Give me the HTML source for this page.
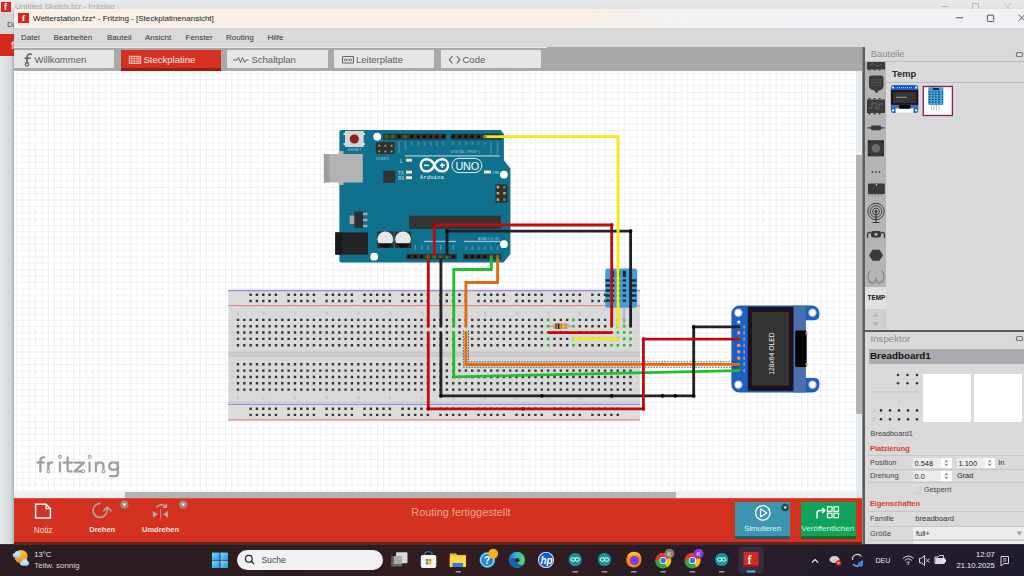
<!DOCTYPE html>
<html><head><meta charset="utf-8"><style>
*{margin:0;padding:0;box-sizing:border-box}
html,body{width:1024px;height:576px;overflow:hidden;background:#e4e4e4;font-family:"Liberation Sans",sans-serif}
.a{position:absolute}
.t{position:absolute;white-space:nowrap;line-height:1}
svg{position:absolute;overflow:visible}
#bgtitle{left:0;top:0;width:1024px;height:14px;background:linear-gradient(180deg,#e9e9e9,#e4e4e4 50%,#dcdcdc)}
#leftstrip{left:0;top:14px;width:14px;height:530px;background:linear-gradient(90deg,#e3e8eb,#d3dadd 70%,#bcc4c8)}
#title{left:14px;top:9px;width:1010px;height:19px;background:linear-gradient(90deg,#f9efe6 0%,#f8efe7 57%,#f1f1f4 67%,#f0f1f5 100%)}
#menu{left:14px;top:28px;width:1010px;height:19px;background:#d9d9d9}
#tabbar{left:14px;top:47px;width:849px;height:24px;background:#a9a9a9}
.tab{position:absolute;top:50px;height:18px;background:#e6e6e6}
.tabtxt{position:absolute;top:54.5px;font-size:9.5px;color:#5b5b5b;white-space:nowrap;line-height:1}
.mi{position:absolute;top:34px;font-size:8px;color:#333;white-space:nowrap;line-height:1}
#vscroll{left:856px;top:71px;width:7px;height:421px;background:#e6ecef}
#vthumb{left:856px;top:155px;width:7px;height:259px;background:#b3b3b3}
#hscroll{left:14px;top:492px;width:842px;height:6px;background:#eef1f3}
#hthumb{left:125px;top:492px;width:551px;height:6px;background:#b3b3b3}
#toolbar{left:14px;top:498px;width:849px;height:45px;background:#d43220}
#tbline{left:14px;top:542px;width:849px;height:2px;background:#7a2018}
#rdiv{left:862px;top:47px;width:3px;height:497px;background:#6e6e6e}
#rpanel{left:865px;top:47px;width:159px;height:497px;background:#d9d9d9}
#taskbar{left:0;top:544px;width:1024px;height:32px;background:linear-gradient(90deg,#2c1f25,#2a1e2a 50%,#231d2c)}
</style></head><body>
<div class="a" id="bgtitle"></div>
<div class="a" style="left:1px;top:2px;width:10px;height:10px;background:#d42a1e"></div>
<div class="t" style="left:15px;top:3px;font-size:8px;color:#a8a8a8">Untitled Sketch.fzz - Fritzing</div>
<svg style="left:0;top:0" width="1024" height="14" viewBox="0 0 1024 14"><path d="M941 6.5H948" stroke="#bbb" stroke-width="1"/><rect x="972.5" y="3.5" width="6" height="6" fill="none" stroke="#bbb" stroke-width="1"/><path d="M1004 3L1011 10M1011 3L1004 10" stroke="#bbb" stroke-width="1"/></svg>
<div class="a" id="leftstrip"></div>
<div class="a" style="left:0;top:13px;width:14px;height:21px;background:#d6d6d6"></div>
<div class="t" style="left:7px;top:21px;font-size:8px;color:#444">Da</div>
<div class="a" style="left:0;top:34px;width:14px;height:22px;background:#d22b1d"></div>
<div class="t" style="left:11px;top:40px;font-size:11px;font-weight:bold;color:#f3d0cb">f</div>
<div class="t" style="left:4px;top:3px;font-size:9px;font-weight:bold;color:#fff">f</div>
<div class="a" style="left:12px;top:9px;width:2px;height:535px;background:linear-gradient(90deg,rgba(0,0,0,0),rgba(0,0,0,0.12))"></div>
<div class="a" id="title"></div>
<div class="a" style="left:18px;top:13px;width:11px;height:10px;background:#d42a1e"></div>
<div class="t" style="left:22px;top:14px;font-size:9px;font-weight:bold;color:#fff;font-family:'Liberation Serif'">f</div>
<div class="t" style="left:33px;top:15px;font-size:8px;color:#1a1a1a">Wetterstation.fzz* - Fritzing - [Steckplatinenansicht]</div>
<svg style="left:0;top:0" width="1024" height="30" viewBox="0 0 1024 30"><path d="M956 17.8H963.2" stroke="#444" stroke-width="0.9"/><rect x="987.4" y="15.2" width="6.3" height="6.3" rx="0.8" fill="none" stroke="#444" stroke-width="0.9"/><path d="M1018.4 14.5L1025 21.1M1025 14.5L1018.4 21.1" stroke="#444" stroke-width="0.9"/></svg>
<div class="a" id="menu"></div>
<div class="mi" style="left:21px">Datei</div>
<div class="mi" style="left:53.5px">Bearbeiten</div>
<div class="mi" style="left:107px">Bauteil</div>
<div class="mi" style="left:145px">Ansicht</div>
<div class="mi" style="left:185.5px">Fenster</div>
<div class="mi" style="left:226px">Routing</div>
<div class="mi" style="left:267.5px">Hilfe</div>
<div class="a" id="tabbar"></div>
<div class="a" style="left:14px;top:47px;width:533px;height:1px;background:#e8e8e8"></div>
<div class="tab" style="left:14px;width:100px"></div>
<div class="tab" style="left:121px;width:100px;background:#d43220;height:20px"></div>
<div class="a" style="left:121px;top:68px;width:100px;height:3px;background:#9a1c10"></div>
<div class="tab" style="left:227px;width:101px"></div>
<div class="tab" style="left:334px;width:100px"></div>
<div class="tab" style="left:441px;width:100px"></div>
<div class="tabtxt" style="left:34.5px">Willkommen</div>
<div class="tabtxt" style="left:143.5px;color:#fbe9e6">Steckplatine</div>
<div class="tabtxt" style="left:251.5px">Schaltplan</div>
<div class="tabtxt" style="left:356px">Leiterplatte</div>
<div class="tabtxt" style="left:462.5px">Code</div>
<svg width="1024" height="80" viewBox="0 0 1024 80" style="left:0;top:0"><path d="M31.2 54.3Q27.3 53.3 27 57.5V62.8" fill="none" stroke="#666" stroke-width="1.8" stroke-linecap="round"/><path d="M24.6 58.2H30.6" stroke="#666" stroke-width="1.6"/><circle cx="27" cy="64.4" r="1.7" fill="none" stroke="#666" stroke-width="1.2"/><rect x="129.3" y="56.3" width="11.4" height="7" fill="none" stroke="#f6d0c8" stroke-width="1"/><path d="M131.8 56.3V63.3M134.4 56.3V63.3M137 56.3V63.3M139 56.3V63.3M129.3 58.6H140.7M129.3 61H140.7" stroke="#f6d0c8" stroke-width="0.7"/><path d="M233 60H237L238.5 57.5L240.5 62.5L242.5 57.5L244.5 62.5L246 60H248.5" fill="none" stroke="#666" stroke-width="1"/><rect x="342.5" y="56.5" width="11" height="6.5" rx="0.8" fill="none" stroke="#666" stroke-width="1.1"/><circle cx="345.5" cy="59.8" r="1.1" fill="none" stroke="#666" stroke-width="0.9"/><circle cx="350.5" cy="59.8" r="1.1" fill="none" stroke="#666" stroke-width="0.9"/><path d="M346.6 59.8H349.4" stroke="#666" stroke-width="0.9"/><path d="M452.5 56L449.3 59.7L452.5 63.4M456.8 56L460 59.7L456.8 63.4" fill="none" stroke="#666" stroke-width="1.1"/></svg>
<div class="a" id="canvasbox" style="left:14px;top:71px;width:842px;height:421px;background:#fff;overflow:hidden"><svg width="842" height="421" viewBox="14 71 842 421" style="left:0;top:0" font-family="Liberation Sans"><defs><pattern id="grid" x="16.1" y="73.0" width="6.33" height="6.33" patternUnits="userSpaceOnUse"><path d="M0 0.5H6.33M0.5 0V6.33" stroke="#eef1f5" stroke-width="1" fill="none"/></pattern></defs><rect x="14" y="71" width="842" height="421" fill="url(#grid)"/><g fill="none" stroke="#a0a0a0" stroke-width="2.3" stroke-linecap="round" stroke-linejoin="round"><path d="M40.4 471.4V460.2Q40.4 457.3 43.4 457.3H44.2M37.4 462.5H43.6"/><path d="M48.3 470V462.6M48.3 465.5Q49.2 462.4 52.3 462.4"/><path d="M59.9 462.6V471.4"/><path d="M67.6 457.4V469.4Q67.6 471.4 69.6 471.4H71.4M63.6 462.6H72"/><path d="M74.6 462.6H84L74.6 471.4H81.6"/><path d="M89.6 462.6V471.4"/><path d="M95.9 471.4V462.6M95.9 465.6Q96.9 462.4 100 462.4Q103.4 462.4 103.4 465.8V470"/><path d="M117.9 462.4V473.6Q117.9 476.2 115.2 476.2H110M117.9 466.2Q117.9 462.4 113.6 462.4Q109.2 462.4 109.2 466.2Q109.2 469.8 113.4 469.8Q117.9 469.8 117.9 466.2"/></g><g fill="#fff" stroke="#a0a0a0" stroke-width="1.1"><circle cx="48.3" cy="471.2" r="1.4"/><circle cx="59.9" cy="456.8" r="1.4"/><circle cx="83.2" cy="471.2" r="1.4"/><circle cx="89.6" cy="456.8" r="1.4"/><circle cx="103.4" cy="471.2" r="1.4"/></g><rect x="228.3" y="289.7" width="411.7" height="130.8" fill="#d9d9d9"/><rect x="228.3" y="289.7" width="411.7" height="15.800000000000011" fill="#dcdcdc"/><rect x="228.3" y="403" width="411.7" height="17.5" fill="#dcdcdc"/><rect x="228.3" y="351.2" width="411.7" height="5.8" fill="#cbcaca"/><rect x="228.3" y="290" width="411.7" height="1.3" fill="#8f8fe6"/><rect x="228.3" y="305" width="411.7" height="1.1" fill="#e58585"/><rect x="228.3" y="401.8" width="411.7" height="0.8" fill="#c2c2c2"/><rect x="228.3" y="403.8" width="411.7" height="1.2" fill="#8f8fe6"/><rect x="228.3" y="419.2" width="411.7" height="1.2" fill="#e58585"/><path d="M249.40 293.60h2.4v2.4h-2.4zM249.40 299.75h2.4v2.4h-2.4zM249.40 407.50h2.4v2.4h-2.4zM249.40 413.70h2.4v2.4h-2.4zM255.73 293.60h2.4v2.4h-2.4zM255.73 299.75h2.4v2.4h-2.4zM255.73 407.50h2.4v2.4h-2.4zM255.73 413.70h2.4v2.4h-2.4zM262.06 293.60h2.4v2.4h-2.4zM262.06 299.75h2.4v2.4h-2.4zM262.06 407.50h2.4v2.4h-2.4zM262.06 413.70h2.4v2.4h-2.4zM268.39 293.60h2.4v2.4h-2.4zM268.39 299.75h2.4v2.4h-2.4zM268.39 407.50h2.4v2.4h-2.4zM268.39 413.70h2.4v2.4h-2.4zM274.72 293.60h2.4v2.4h-2.4zM274.72 299.75h2.4v2.4h-2.4zM274.72 407.50h2.4v2.4h-2.4zM274.72 413.70h2.4v2.4h-2.4zM287.38 293.60h2.4v2.4h-2.4zM287.38 299.75h2.4v2.4h-2.4zM287.38 407.50h2.4v2.4h-2.4zM287.38 413.70h2.4v2.4h-2.4zM293.71 293.60h2.4v2.4h-2.4zM293.71 299.75h2.4v2.4h-2.4zM293.71 407.50h2.4v2.4h-2.4zM293.71 413.70h2.4v2.4h-2.4zM300.04 293.60h2.4v2.4h-2.4zM300.04 299.75h2.4v2.4h-2.4zM300.04 407.50h2.4v2.4h-2.4zM300.04 413.70h2.4v2.4h-2.4zM306.37 293.60h2.4v2.4h-2.4zM306.37 299.75h2.4v2.4h-2.4zM306.37 407.50h2.4v2.4h-2.4zM306.37 413.70h2.4v2.4h-2.4zM312.70 293.60h2.4v2.4h-2.4zM312.70 299.75h2.4v2.4h-2.4zM312.70 407.50h2.4v2.4h-2.4zM312.70 413.70h2.4v2.4h-2.4zM325.36 293.60h2.4v2.4h-2.4zM325.36 299.75h2.4v2.4h-2.4zM325.36 407.50h2.4v2.4h-2.4zM325.36 413.70h2.4v2.4h-2.4zM331.69 293.60h2.4v2.4h-2.4zM331.69 299.75h2.4v2.4h-2.4zM331.69 407.50h2.4v2.4h-2.4zM331.69 413.70h2.4v2.4h-2.4zM338.02 293.60h2.4v2.4h-2.4zM338.02 299.75h2.4v2.4h-2.4zM338.02 407.50h2.4v2.4h-2.4zM338.02 413.70h2.4v2.4h-2.4zM344.35 293.60h2.4v2.4h-2.4zM344.35 299.75h2.4v2.4h-2.4zM344.35 407.50h2.4v2.4h-2.4zM344.35 413.70h2.4v2.4h-2.4zM350.68 293.60h2.4v2.4h-2.4zM350.68 299.75h2.4v2.4h-2.4zM350.68 407.50h2.4v2.4h-2.4zM350.68 413.70h2.4v2.4h-2.4zM363.34 293.60h2.4v2.4h-2.4zM363.34 299.75h2.4v2.4h-2.4zM363.34 407.50h2.4v2.4h-2.4zM363.34 413.70h2.4v2.4h-2.4zM369.67 293.60h2.4v2.4h-2.4zM369.67 299.75h2.4v2.4h-2.4zM369.67 407.50h2.4v2.4h-2.4zM369.67 413.70h2.4v2.4h-2.4zM376.00 293.60h2.4v2.4h-2.4zM376.00 299.75h2.4v2.4h-2.4zM376.00 407.50h2.4v2.4h-2.4zM376.00 413.70h2.4v2.4h-2.4zM382.33 293.60h2.4v2.4h-2.4zM382.33 299.75h2.4v2.4h-2.4zM382.33 407.50h2.4v2.4h-2.4zM382.33 413.70h2.4v2.4h-2.4zM388.66 293.60h2.4v2.4h-2.4zM388.66 299.75h2.4v2.4h-2.4zM388.66 407.50h2.4v2.4h-2.4zM388.66 413.70h2.4v2.4h-2.4zM401.32 293.60h2.4v2.4h-2.4zM401.32 299.75h2.4v2.4h-2.4zM401.32 407.50h2.4v2.4h-2.4zM401.32 413.70h2.4v2.4h-2.4zM407.65 293.60h2.4v2.4h-2.4zM407.65 299.75h2.4v2.4h-2.4zM407.65 407.50h2.4v2.4h-2.4zM407.65 413.70h2.4v2.4h-2.4zM413.98 293.60h2.4v2.4h-2.4zM413.98 299.75h2.4v2.4h-2.4zM413.98 407.50h2.4v2.4h-2.4zM413.98 413.70h2.4v2.4h-2.4zM420.31 293.60h2.4v2.4h-2.4zM420.31 299.75h2.4v2.4h-2.4zM420.31 407.50h2.4v2.4h-2.4zM420.31 413.70h2.4v2.4h-2.4zM426.64 293.60h2.4v2.4h-2.4zM426.64 299.75h2.4v2.4h-2.4zM426.64 407.50h2.4v2.4h-2.4zM426.64 413.70h2.4v2.4h-2.4zM439.30 293.60h2.4v2.4h-2.4zM439.30 299.75h2.4v2.4h-2.4zM439.30 407.50h2.4v2.4h-2.4zM439.30 413.70h2.4v2.4h-2.4zM445.63 293.60h2.4v2.4h-2.4zM445.63 299.75h2.4v2.4h-2.4zM445.63 407.50h2.4v2.4h-2.4zM445.63 413.70h2.4v2.4h-2.4zM451.96 293.60h2.4v2.4h-2.4zM451.96 299.75h2.4v2.4h-2.4zM451.96 407.50h2.4v2.4h-2.4zM451.96 413.70h2.4v2.4h-2.4zM458.29 293.60h2.4v2.4h-2.4zM458.29 299.75h2.4v2.4h-2.4zM458.29 407.50h2.4v2.4h-2.4zM458.29 413.70h2.4v2.4h-2.4zM464.62 293.60h2.4v2.4h-2.4zM464.62 299.75h2.4v2.4h-2.4zM464.62 407.50h2.4v2.4h-2.4zM464.62 413.70h2.4v2.4h-2.4zM477.28 293.60h2.4v2.4h-2.4zM477.28 299.75h2.4v2.4h-2.4zM477.28 407.50h2.4v2.4h-2.4zM477.28 413.70h2.4v2.4h-2.4zM483.61 293.60h2.4v2.4h-2.4zM483.61 299.75h2.4v2.4h-2.4zM483.61 407.50h2.4v2.4h-2.4zM483.61 413.70h2.4v2.4h-2.4zM489.94 293.60h2.4v2.4h-2.4zM489.94 299.75h2.4v2.4h-2.4zM489.94 407.50h2.4v2.4h-2.4zM489.94 413.70h2.4v2.4h-2.4zM496.27 293.60h2.4v2.4h-2.4zM496.27 299.75h2.4v2.4h-2.4zM496.27 407.50h2.4v2.4h-2.4zM496.27 413.70h2.4v2.4h-2.4zM502.60 293.60h2.4v2.4h-2.4zM502.60 299.75h2.4v2.4h-2.4zM502.60 407.50h2.4v2.4h-2.4zM502.60 413.70h2.4v2.4h-2.4zM515.26 293.60h2.4v2.4h-2.4zM515.26 299.75h2.4v2.4h-2.4zM515.26 407.50h2.4v2.4h-2.4zM515.26 413.70h2.4v2.4h-2.4zM521.59 293.60h2.4v2.4h-2.4zM521.59 299.75h2.4v2.4h-2.4zM521.59 407.50h2.4v2.4h-2.4zM521.59 413.70h2.4v2.4h-2.4zM527.92 293.60h2.4v2.4h-2.4zM527.92 299.75h2.4v2.4h-2.4zM527.92 407.50h2.4v2.4h-2.4zM527.92 413.70h2.4v2.4h-2.4zM534.25 293.60h2.4v2.4h-2.4zM534.25 299.75h2.4v2.4h-2.4zM534.25 407.50h2.4v2.4h-2.4zM534.25 413.70h2.4v2.4h-2.4zM540.58 293.60h2.4v2.4h-2.4zM540.58 299.75h2.4v2.4h-2.4zM540.58 407.50h2.4v2.4h-2.4zM540.58 413.70h2.4v2.4h-2.4zM553.24 293.60h2.4v2.4h-2.4zM553.24 299.75h2.4v2.4h-2.4zM553.24 407.50h2.4v2.4h-2.4zM553.24 413.70h2.4v2.4h-2.4zM559.57 293.60h2.4v2.4h-2.4zM559.57 299.75h2.4v2.4h-2.4zM559.57 407.50h2.4v2.4h-2.4zM559.57 413.70h2.4v2.4h-2.4zM565.90 293.60h2.4v2.4h-2.4zM565.90 299.75h2.4v2.4h-2.4zM565.90 407.50h2.4v2.4h-2.4zM565.90 413.70h2.4v2.4h-2.4zM572.23 293.60h2.4v2.4h-2.4zM572.23 299.75h2.4v2.4h-2.4zM572.23 407.50h2.4v2.4h-2.4zM572.23 413.70h2.4v2.4h-2.4zM578.56 293.60h2.4v2.4h-2.4zM578.56 299.75h2.4v2.4h-2.4zM578.56 407.50h2.4v2.4h-2.4zM578.56 413.70h2.4v2.4h-2.4zM591.22 293.60h2.4v2.4h-2.4zM591.22 299.75h2.4v2.4h-2.4zM591.22 407.50h2.4v2.4h-2.4zM591.22 413.70h2.4v2.4h-2.4zM597.55 293.60h2.4v2.4h-2.4zM597.55 299.75h2.4v2.4h-2.4zM597.55 407.50h2.4v2.4h-2.4zM597.55 413.70h2.4v2.4h-2.4zM603.88 293.60h2.4v2.4h-2.4zM603.88 299.75h2.4v2.4h-2.4zM603.88 407.50h2.4v2.4h-2.4zM603.88 413.70h2.4v2.4h-2.4zM610.21 293.60h2.4v2.4h-2.4zM610.21 299.75h2.4v2.4h-2.4zM610.21 407.50h2.4v2.4h-2.4zM610.21 413.70h2.4v2.4h-2.4zM616.54 293.60h2.4v2.4h-2.4zM616.54 299.75h2.4v2.4h-2.4zM616.54 407.50h2.4v2.4h-2.4zM616.54 413.70h2.4v2.4h-2.4zM236.80 318.70h2.4v2.4h-2.4zM236.80 363.10h2.4v2.4h-2.4zM236.80 325.03h2.4v2.4h-2.4zM236.80 369.43h2.4v2.4h-2.4zM236.80 331.36h2.4v2.4h-2.4zM236.80 375.76h2.4v2.4h-2.4zM236.80 337.69h2.4v2.4h-2.4zM236.80 382.09h2.4v2.4h-2.4zM236.80 344.02h2.4v2.4h-2.4zM236.80 388.42h2.4v2.4h-2.4zM243.13 318.70h2.4v2.4h-2.4zM243.13 363.10h2.4v2.4h-2.4zM243.13 325.03h2.4v2.4h-2.4zM243.13 369.43h2.4v2.4h-2.4zM243.13 331.36h2.4v2.4h-2.4zM243.13 375.76h2.4v2.4h-2.4zM243.13 337.69h2.4v2.4h-2.4zM243.13 382.09h2.4v2.4h-2.4zM243.13 344.02h2.4v2.4h-2.4zM243.13 388.42h2.4v2.4h-2.4zM249.46 318.70h2.4v2.4h-2.4zM249.46 363.10h2.4v2.4h-2.4zM249.46 325.03h2.4v2.4h-2.4zM249.46 369.43h2.4v2.4h-2.4zM249.46 331.36h2.4v2.4h-2.4zM249.46 375.76h2.4v2.4h-2.4zM249.46 337.69h2.4v2.4h-2.4zM249.46 382.09h2.4v2.4h-2.4zM249.46 344.02h2.4v2.4h-2.4zM249.46 388.42h2.4v2.4h-2.4zM255.79 318.70h2.4v2.4h-2.4zM255.79 363.10h2.4v2.4h-2.4zM255.79 325.03h2.4v2.4h-2.4zM255.79 369.43h2.4v2.4h-2.4zM255.79 331.36h2.4v2.4h-2.4zM255.79 375.76h2.4v2.4h-2.4zM255.79 337.69h2.4v2.4h-2.4zM255.79 382.09h2.4v2.4h-2.4zM255.79 344.02h2.4v2.4h-2.4zM255.79 388.42h2.4v2.4h-2.4zM262.12 318.70h2.4v2.4h-2.4zM262.12 363.10h2.4v2.4h-2.4zM262.12 325.03h2.4v2.4h-2.4zM262.12 369.43h2.4v2.4h-2.4zM262.12 331.36h2.4v2.4h-2.4zM262.12 375.76h2.4v2.4h-2.4zM262.12 337.69h2.4v2.4h-2.4zM262.12 382.09h2.4v2.4h-2.4zM262.12 344.02h2.4v2.4h-2.4zM262.12 388.42h2.4v2.4h-2.4zM268.45 318.70h2.4v2.4h-2.4zM268.45 363.10h2.4v2.4h-2.4zM268.45 325.03h2.4v2.4h-2.4zM268.45 369.43h2.4v2.4h-2.4zM268.45 331.36h2.4v2.4h-2.4zM268.45 375.76h2.4v2.4h-2.4zM268.45 337.69h2.4v2.4h-2.4zM268.45 382.09h2.4v2.4h-2.4zM268.45 344.02h2.4v2.4h-2.4zM268.45 388.42h2.4v2.4h-2.4zM274.78 318.70h2.4v2.4h-2.4zM274.78 363.10h2.4v2.4h-2.4zM274.78 325.03h2.4v2.4h-2.4zM274.78 369.43h2.4v2.4h-2.4zM274.78 331.36h2.4v2.4h-2.4zM274.78 375.76h2.4v2.4h-2.4zM274.78 337.69h2.4v2.4h-2.4zM274.78 382.09h2.4v2.4h-2.4zM274.78 344.02h2.4v2.4h-2.4zM274.78 388.42h2.4v2.4h-2.4zM281.11 318.70h2.4v2.4h-2.4zM281.11 363.10h2.4v2.4h-2.4zM281.11 325.03h2.4v2.4h-2.4zM281.11 369.43h2.4v2.4h-2.4zM281.11 331.36h2.4v2.4h-2.4zM281.11 375.76h2.4v2.4h-2.4zM281.11 337.69h2.4v2.4h-2.4zM281.11 382.09h2.4v2.4h-2.4zM281.11 344.02h2.4v2.4h-2.4zM281.11 388.42h2.4v2.4h-2.4zM287.44 318.70h2.4v2.4h-2.4zM287.44 363.10h2.4v2.4h-2.4zM287.44 325.03h2.4v2.4h-2.4zM287.44 369.43h2.4v2.4h-2.4zM287.44 331.36h2.4v2.4h-2.4zM287.44 375.76h2.4v2.4h-2.4zM287.44 337.69h2.4v2.4h-2.4zM287.44 382.09h2.4v2.4h-2.4zM287.44 344.02h2.4v2.4h-2.4zM287.44 388.42h2.4v2.4h-2.4zM293.77 318.70h2.4v2.4h-2.4zM293.77 363.10h2.4v2.4h-2.4zM293.77 325.03h2.4v2.4h-2.4zM293.77 369.43h2.4v2.4h-2.4zM293.77 331.36h2.4v2.4h-2.4zM293.77 375.76h2.4v2.4h-2.4zM293.77 337.69h2.4v2.4h-2.4zM293.77 382.09h2.4v2.4h-2.4zM293.77 344.02h2.4v2.4h-2.4zM293.77 388.42h2.4v2.4h-2.4zM300.10 318.70h2.4v2.4h-2.4zM300.10 363.10h2.4v2.4h-2.4zM300.10 325.03h2.4v2.4h-2.4zM300.10 369.43h2.4v2.4h-2.4zM300.10 331.36h2.4v2.4h-2.4zM300.10 375.76h2.4v2.4h-2.4zM300.10 337.69h2.4v2.4h-2.4zM300.10 382.09h2.4v2.4h-2.4zM300.10 344.02h2.4v2.4h-2.4zM300.10 388.42h2.4v2.4h-2.4zM306.43 318.70h2.4v2.4h-2.4zM306.43 363.10h2.4v2.4h-2.4zM306.43 325.03h2.4v2.4h-2.4zM306.43 369.43h2.4v2.4h-2.4zM306.43 331.36h2.4v2.4h-2.4zM306.43 375.76h2.4v2.4h-2.4zM306.43 337.69h2.4v2.4h-2.4zM306.43 382.09h2.4v2.4h-2.4zM306.43 344.02h2.4v2.4h-2.4zM306.43 388.42h2.4v2.4h-2.4zM312.76 318.70h2.4v2.4h-2.4zM312.76 363.10h2.4v2.4h-2.4zM312.76 325.03h2.4v2.4h-2.4zM312.76 369.43h2.4v2.4h-2.4zM312.76 331.36h2.4v2.4h-2.4zM312.76 375.76h2.4v2.4h-2.4zM312.76 337.69h2.4v2.4h-2.4zM312.76 382.09h2.4v2.4h-2.4zM312.76 344.02h2.4v2.4h-2.4zM312.76 388.42h2.4v2.4h-2.4zM319.09 318.70h2.4v2.4h-2.4zM319.09 363.10h2.4v2.4h-2.4zM319.09 325.03h2.4v2.4h-2.4zM319.09 369.43h2.4v2.4h-2.4zM319.09 331.36h2.4v2.4h-2.4zM319.09 375.76h2.4v2.4h-2.4zM319.09 337.69h2.4v2.4h-2.4zM319.09 382.09h2.4v2.4h-2.4zM319.09 344.02h2.4v2.4h-2.4zM319.09 388.42h2.4v2.4h-2.4zM325.42 318.70h2.4v2.4h-2.4zM325.42 363.10h2.4v2.4h-2.4zM325.42 325.03h2.4v2.4h-2.4zM325.42 369.43h2.4v2.4h-2.4zM325.42 331.36h2.4v2.4h-2.4zM325.42 375.76h2.4v2.4h-2.4zM325.42 337.69h2.4v2.4h-2.4zM325.42 382.09h2.4v2.4h-2.4zM325.42 344.02h2.4v2.4h-2.4zM325.42 388.42h2.4v2.4h-2.4zM331.75 318.70h2.4v2.4h-2.4zM331.75 363.10h2.4v2.4h-2.4zM331.75 325.03h2.4v2.4h-2.4zM331.75 369.43h2.4v2.4h-2.4zM331.75 331.36h2.4v2.4h-2.4zM331.75 375.76h2.4v2.4h-2.4zM331.75 337.69h2.4v2.4h-2.4zM331.75 382.09h2.4v2.4h-2.4zM331.75 344.02h2.4v2.4h-2.4zM331.75 388.42h2.4v2.4h-2.4zM338.08 318.70h2.4v2.4h-2.4zM338.08 363.10h2.4v2.4h-2.4zM338.08 325.03h2.4v2.4h-2.4zM338.08 369.43h2.4v2.4h-2.4zM338.08 331.36h2.4v2.4h-2.4zM338.08 375.76h2.4v2.4h-2.4zM338.08 337.69h2.4v2.4h-2.4zM338.08 382.09h2.4v2.4h-2.4zM338.08 344.02h2.4v2.4h-2.4zM338.08 388.42h2.4v2.4h-2.4zM344.41 318.70h2.4v2.4h-2.4zM344.41 363.10h2.4v2.4h-2.4zM344.41 325.03h2.4v2.4h-2.4zM344.41 369.43h2.4v2.4h-2.4zM344.41 331.36h2.4v2.4h-2.4zM344.41 375.76h2.4v2.4h-2.4zM344.41 337.69h2.4v2.4h-2.4zM344.41 382.09h2.4v2.4h-2.4zM344.41 344.02h2.4v2.4h-2.4zM344.41 388.42h2.4v2.4h-2.4zM350.74 318.70h2.4v2.4h-2.4zM350.74 363.10h2.4v2.4h-2.4zM350.74 325.03h2.4v2.4h-2.4zM350.74 369.43h2.4v2.4h-2.4zM350.74 331.36h2.4v2.4h-2.4zM350.74 375.76h2.4v2.4h-2.4zM350.74 337.69h2.4v2.4h-2.4zM350.74 382.09h2.4v2.4h-2.4zM350.74 344.02h2.4v2.4h-2.4zM350.74 388.42h2.4v2.4h-2.4zM357.07 318.70h2.4v2.4h-2.4zM357.07 363.10h2.4v2.4h-2.4zM357.07 325.03h2.4v2.4h-2.4zM357.07 369.43h2.4v2.4h-2.4zM357.07 331.36h2.4v2.4h-2.4zM357.07 375.76h2.4v2.4h-2.4zM357.07 337.69h2.4v2.4h-2.4zM357.07 382.09h2.4v2.4h-2.4zM357.07 344.02h2.4v2.4h-2.4zM357.07 388.42h2.4v2.4h-2.4zM363.40 318.70h2.4v2.4h-2.4zM363.40 363.10h2.4v2.4h-2.4zM363.40 325.03h2.4v2.4h-2.4zM363.40 369.43h2.4v2.4h-2.4zM363.40 331.36h2.4v2.4h-2.4zM363.40 375.76h2.4v2.4h-2.4zM363.40 337.69h2.4v2.4h-2.4zM363.40 382.09h2.4v2.4h-2.4zM363.40 344.02h2.4v2.4h-2.4zM363.40 388.42h2.4v2.4h-2.4zM369.73 318.70h2.4v2.4h-2.4zM369.73 363.10h2.4v2.4h-2.4zM369.73 325.03h2.4v2.4h-2.4zM369.73 369.43h2.4v2.4h-2.4zM369.73 331.36h2.4v2.4h-2.4zM369.73 375.76h2.4v2.4h-2.4zM369.73 337.69h2.4v2.4h-2.4zM369.73 382.09h2.4v2.4h-2.4zM369.73 344.02h2.4v2.4h-2.4zM369.73 388.42h2.4v2.4h-2.4zM376.06 318.70h2.4v2.4h-2.4zM376.06 363.10h2.4v2.4h-2.4zM376.06 325.03h2.4v2.4h-2.4zM376.06 369.43h2.4v2.4h-2.4zM376.06 331.36h2.4v2.4h-2.4zM376.06 375.76h2.4v2.4h-2.4zM376.06 337.69h2.4v2.4h-2.4zM376.06 382.09h2.4v2.4h-2.4zM376.06 344.02h2.4v2.4h-2.4zM376.06 388.42h2.4v2.4h-2.4zM382.39 318.70h2.4v2.4h-2.4zM382.39 363.10h2.4v2.4h-2.4zM382.39 325.03h2.4v2.4h-2.4zM382.39 369.43h2.4v2.4h-2.4zM382.39 331.36h2.4v2.4h-2.4zM382.39 375.76h2.4v2.4h-2.4zM382.39 337.69h2.4v2.4h-2.4zM382.39 382.09h2.4v2.4h-2.4zM382.39 344.02h2.4v2.4h-2.4zM382.39 388.42h2.4v2.4h-2.4zM388.72 318.70h2.4v2.4h-2.4zM388.72 363.10h2.4v2.4h-2.4zM388.72 325.03h2.4v2.4h-2.4zM388.72 369.43h2.4v2.4h-2.4zM388.72 331.36h2.4v2.4h-2.4zM388.72 375.76h2.4v2.4h-2.4zM388.72 337.69h2.4v2.4h-2.4zM388.72 382.09h2.4v2.4h-2.4zM388.72 344.02h2.4v2.4h-2.4zM388.72 388.42h2.4v2.4h-2.4zM395.05 318.70h2.4v2.4h-2.4zM395.05 363.10h2.4v2.4h-2.4zM395.05 325.03h2.4v2.4h-2.4zM395.05 369.43h2.4v2.4h-2.4zM395.05 331.36h2.4v2.4h-2.4zM395.05 375.76h2.4v2.4h-2.4zM395.05 337.69h2.4v2.4h-2.4zM395.05 382.09h2.4v2.4h-2.4zM395.05 344.02h2.4v2.4h-2.4zM395.05 388.42h2.4v2.4h-2.4zM401.38 318.70h2.4v2.4h-2.4zM401.38 363.10h2.4v2.4h-2.4zM401.38 325.03h2.4v2.4h-2.4zM401.38 369.43h2.4v2.4h-2.4zM401.38 331.36h2.4v2.4h-2.4zM401.38 375.76h2.4v2.4h-2.4zM401.38 337.69h2.4v2.4h-2.4zM401.38 382.09h2.4v2.4h-2.4zM401.38 344.02h2.4v2.4h-2.4zM401.38 388.42h2.4v2.4h-2.4zM407.71 318.70h2.4v2.4h-2.4zM407.71 363.10h2.4v2.4h-2.4zM407.71 325.03h2.4v2.4h-2.4zM407.71 369.43h2.4v2.4h-2.4zM407.71 331.36h2.4v2.4h-2.4zM407.71 375.76h2.4v2.4h-2.4zM407.71 337.69h2.4v2.4h-2.4zM407.71 382.09h2.4v2.4h-2.4zM407.71 344.02h2.4v2.4h-2.4zM407.71 388.42h2.4v2.4h-2.4zM414.04 318.70h2.4v2.4h-2.4zM414.04 363.10h2.4v2.4h-2.4zM414.04 325.03h2.4v2.4h-2.4zM414.04 369.43h2.4v2.4h-2.4zM414.04 331.36h2.4v2.4h-2.4zM414.04 375.76h2.4v2.4h-2.4zM414.04 337.69h2.4v2.4h-2.4zM414.04 382.09h2.4v2.4h-2.4zM414.04 344.02h2.4v2.4h-2.4zM414.04 388.42h2.4v2.4h-2.4zM420.37 318.70h2.4v2.4h-2.4zM420.37 363.10h2.4v2.4h-2.4zM420.37 325.03h2.4v2.4h-2.4zM420.37 369.43h2.4v2.4h-2.4zM420.37 331.36h2.4v2.4h-2.4zM420.37 375.76h2.4v2.4h-2.4zM420.37 337.69h2.4v2.4h-2.4zM420.37 382.09h2.4v2.4h-2.4zM420.37 344.02h2.4v2.4h-2.4zM420.37 388.42h2.4v2.4h-2.4zM426.70 318.70h2.4v2.4h-2.4zM426.70 363.10h2.4v2.4h-2.4zM426.70 369.43h2.4v2.4h-2.4zM426.70 375.76h2.4v2.4h-2.4zM426.70 337.69h2.4v2.4h-2.4zM426.70 382.09h2.4v2.4h-2.4zM426.70 344.02h2.4v2.4h-2.4zM426.70 388.42h2.4v2.4h-2.4zM433.03 318.70h2.4v2.4h-2.4zM433.03 363.10h2.4v2.4h-2.4zM433.03 325.03h2.4v2.4h-2.4zM433.03 369.43h2.4v2.4h-2.4zM433.03 331.36h2.4v2.4h-2.4zM433.03 375.76h2.4v2.4h-2.4zM433.03 337.69h2.4v2.4h-2.4zM433.03 382.09h2.4v2.4h-2.4zM433.03 344.02h2.4v2.4h-2.4zM433.03 388.42h2.4v2.4h-2.4zM439.36 318.70h2.4v2.4h-2.4zM439.36 363.10h2.4v2.4h-2.4zM439.36 369.43h2.4v2.4h-2.4zM439.36 375.76h2.4v2.4h-2.4zM439.36 337.69h2.4v2.4h-2.4zM439.36 382.09h2.4v2.4h-2.4zM439.36 344.02h2.4v2.4h-2.4zM439.36 388.42h2.4v2.4h-2.4zM445.69 318.70h2.4v2.4h-2.4zM445.69 363.10h2.4v2.4h-2.4zM445.69 325.03h2.4v2.4h-2.4zM445.69 369.43h2.4v2.4h-2.4zM445.69 331.36h2.4v2.4h-2.4zM445.69 375.76h2.4v2.4h-2.4zM445.69 337.69h2.4v2.4h-2.4zM445.69 382.09h2.4v2.4h-2.4zM445.69 344.02h2.4v2.4h-2.4zM445.69 388.42h2.4v2.4h-2.4zM452.02 318.70h2.4v2.4h-2.4zM452.02 363.10h2.4v2.4h-2.4zM452.02 369.43h2.4v2.4h-2.4zM452.02 375.76h2.4v2.4h-2.4zM452.02 337.69h2.4v2.4h-2.4zM452.02 382.09h2.4v2.4h-2.4zM452.02 344.02h2.4v2.4h-2.4zM452.02 388.42h2.4v2.4h-2.4zM458.35 318.70h2.4v2.4h-2.4zM458.35 363.10h2.4v2.4h-2.4zM458.35 325.03h2.4v2.4h-2.4zM458.35 369.43h2.4v2.4h-2.4zM458.35 331.36h2.4v2.4h-2.4zM458.35 375.76h2.4v2.4h-2.4zM458.35 337.69h2.4v2.4h-2.4zM458.35 382.09h2.4v2.4h-2.4zM458.35 344.02h2.4v2.4h-2.4zM458.35 388.42h2.4v2.4h-2.4zM464.68 318.70h2.4v2.4h-2.4zM464.68 363.10h2.4v2.4h-2.4zM464.68 369.43h2.4v2.4h-2.4zM464.68 375.76h2.4v2.4h-2.4zM464.68 337.69h2.4v2.4h-2.4zM464.68 382.09h2.4v2.4h-2.4zM464.68 344.02h2.4v2.4h-2.4zM464.68 388.42h2.4v2.4h-2.4zM471.01 318.70h2.4v2.4h-2.4zM471.01 363.10h2.4v2.4h-2.4zM471.01 325.03h2.4v2.4h-2.4zM471.01 369.43h2.4v2.4h-2.4zM471.01 331.36h2.4v2.4h-2.4zM471.01 375.76h2.4v2.4h-2.4zM471.01 337.69h2.4v2.4h-2.4zM471.01 382.09h2.4v2.4h-2.4zM471.01 344.02h2.4v2.4h-2.4zM471.01 388.42h2.4v2.4h-2.4zM477.34 318.70h2.4v2.4h-2.4zM477.34 363.10h2.4v2.4h-2.4zM477.34 325.03h2.4v2.4h-2.4zM477.34 369.43h2.4v2.4h-2.4zM477.34 331.36h2.4v2.4h-2.4zM477.34 375.76h2.4v2.4h-2.4zM477.34 337.69h2.4v2.4h-2.4zM477.34 382.09h2.4v2.4h-2.4zM477.34 344.02h2.4v2.4h-2.4zM477.34 388.42h2.4v2.4h-2.4zM483.67 318.70h2.4v2.4h-2.4zM483.67 363.10h2.4v2.4h-2.4zM483.67 325.03h2.4v2.4h-2.4zM483.67 369.43h2.4v2.4h-2.4zM483.67 331.36h2.4v2.4h-2.4zM483.67 375.76h2.4v2.4h-2.4zM483.67 337.69h2.4v2.4h-2.4zM483.67 382.09h2.4v2.4h-2.4zM483.67 344.02h2.4v2.4h-2.4zM483.67 388.42h2.4v2.4h-2.4zM490.00 318.70h2.4v2.4h-2.4zM490.00 363.10h2.4v2.4h-2.4zM490.00 325.03h2.4v2.4h-2.4zM490.00 369.43h2.4v2.4h-2.4zM490.00 331.36h2.4v2.4h-2.4zM490.00 375.76h2.4v2.4h-2.4zM490.00 337.69h2.4v2.4h-2.4zM490.00 382.09h2.4v2.4h-2.4zM490.00 344.02h2.4v2.4h-2.4zM490.00 388.42h2.4v2.4h-2.4zM496.33 318.70h2.4v2.4h-2.4zM496.33 363.10h2.4v2.4h-2.4zM496.33 325.03h2.4v2.4h-2.4zM496.33 369.43h2.4v2.4h-2.4zM496.33 331.36h2.4v2.4h-2.4zM496.33 375.76h2.4v2.4h-2.4zM496.33 337.69h2.4v2.4h-2.4zM496.33 382.09h2.4v2.4h-2.4zM496.33 344.02h2.4v2.4h-2.4zM496.33 388.42h2.4v2.4h-2.4zM502.66 318.70h2.4v2.4h-2.4zM502.66 363.10h2.4v2.4h-2.4zM502.66 325.03h2.4v2.4h-2.4zM502.66 369.43h2.4v2.4h-2.4zM502.66 331.36h2.4v2.4h-2.4zM502.66 375.76h2.4v2.4h-2.4zM502.66 337.69h2.4v2.4h-2.4zM502.66 382.09h2.4v2.4h-2.4zM502.66 344.02h2.4v2.4h-2.4zM502.66 388.42h2.4v2.4h-2.4zM508.99 318.70h2.4v2.4h-2.4zM508.99 363.10h2.4v2.4h-2.4zM508.99 325.03h2.4v2.4h-2.4zM508.99 369.43h2.4v2.4h-2.4zM508.99 331.36h2.4v2.4h-2.4zM508.99 375.76h2.4v2.4h-2.4zM508.99 337.69h2.4v2.4h-2.4zM508.99 382.09h2.4v2.4h-2.4zM508.99 344.02h2.4v2.4h-2.4zM508.99 388.42h2.4v2.4h-2.4zM515.32 318.70h2.4v2.4h-2.4zM515.32 363.10h2.4v2.4h-2.4zM515.32 325.03h2.4v2.4h-2.4zM515.32 369.43h2.4v2.4h-2.4zM515.32 331.36h2.4v2.4h-2.4zM515.32 375.76h2.4v2.4h-2.4zM515.32 337.69h2.4v2.4h-2.4zM515.32 382.09h2.4v2.4h-2.4zM515.32 344.02h2.4v2.4h-2.4zM515.32 388.42h2.4v2.4h-2.4zM521.65 318.70h2.4v2.4h-2.4zM521.65 363.10h2.4v2.4h-2.4zM521.65 325.03h2.4v2.4h-2.4zM521.65 369.43h2.4v2.4h-2.4zM521.65 331.36h2.4v2.4h-2.4zM521.65 375.76h2.4v2.4h-2.4zM521.65 337.69h2.4v2.4h-2.4zM521.65 382.09h2.4v2.4h-2.4zM521.65 344.02h2.4v2.4h-2.4zM521.65 388.42h2.4v2.4h-2.4zM527.98 318.70h2.4v2.4h-2.4zM527.98 363.10h2.4v2.4h-2.4zM527.98 325.03h2.4v2.4h-2.4zM527.98 369.43h2.4v2.4h-2.4zM527.98 331.36h2.4v2.4h-2.4zM527.98 375.76h2.4v2.4h-2.4zM527.98 337.69h2.4v2.4h-2.4zM527.98 382.09h2.4v2.4h-2.4zM527.98 344.02h2.4v2.4h-2.4zM527.98 388.42h2.4v2.4h-2.4zM534.31 318.70h2.4v2.4h-2.4zM534.31 363.10h2.4v2.4h-2.4zM534.31 325.03h2.4v2.4h-2.4zM534.31 369.43h2.4v2.4h-2.4zM534.31 331.36h2.4v2.4h-2.4zM534.31 375.76h2.4v2.4h-2.4zM534.31 337.69h2.4v2.4h-2.4zM534.31 382.09h2.4v2.4h-2.4zM534.31 344.02h2.4v2.4h-2.4zM534.31 388.42h2.4v2.4h-2.4zM540.64 318.70h2.4v2.4h-2.4zM540.64 363.10h2.4v2.4h-2.4zM540.64 325.03h2.4v2.4h-2.4zM540.64 369.43h2.4v2.4h-2.4zM540.64 331.36h2.4v2.4h-2.4zM540.64 375.76h2.4v2.4h-2.4zM540.64 337.69h2.4v2.4h-2.4zM540.64 382.09h2.4v2.4h-2.4zM540.64 344.02h2.4v2.4h-2.4zM540.64 388.42h2.4v2.4h-2.4zM546.97 363.10h2.4v2.4h-2.4zM546.97 369.43h2.4v2.4h-2.4zM546.97 375.76h2.4v2.4h-2.4zM546.97 382.09h2.4v2.4h-2.4zM546.97 388.42h2.4v2.4h-2.4zM553.30 318.70h2.4v2.4h-2.4zM553.30 363.10h2.4v2.4h-2.4zM553.30 325.03h2.4v2.4h-2.4zM553.30 369.43h2.4v2.4h-2.4zM553.30 331.36h2.4v2.4h-2.4zM553.30 375.76h2.4v2.4h-2.4zM553.30 337.69h2.4v2.4h-2.4zM553.30 382.09h2.4v2.4h-2.4zM553.30 344.02h2.4v2.4h-2.4zM553.30 388.42h2.4v2.4h-2.4zM559.63 318.70h2.4v2.4h-2.4zM559.63 363.10h2.4v2.4h-2.4zM559.63 325.03h2.4v2.4h-2.4zM559.63 369.43h2.4v2.4h-2.4zM559.63 331.36h2.4v2.4h-2.4zM559.63 375.76h2.4v2.4h-2.4zM559.63 337.69h2.4v2.4h-2.4zM559.63 382.09h2.4v2.4h-2.4zM559.63 344.02h2.4v2.4h-2.4zM559.63 388.42h2.4v2.4h-2.4zM565.96 318.70h2.4v2.4h-2.4zM565.96 363.10h2.4v2.4h-2.4zM565.96 325.03h2.4v2.4h-2.4zM565.96 369.43h2.4v2.4h-2.4zM565.96 331.36h2.4v2.4h-2.4zM565.96 375.76h2.4v2.4h-2.4zM565.96 337.69h2.4v2.4h-2.4zM565.96 382.09h2.4v2.4h-2.4zM565.96 344.02h2.4v2.4h-2.4zM565.96 388.42h2.4v2.4h-2.4zM572.29 363.10h2.4v2.4h-2.4zM572.29 369.43h2.4v2.4h-2.4zM572.29 375.76h2.4v2.4h-2.4zM572.29 382.09h2.4v2.4h-2.4zM572.29 388.42h2.4v2.4h-2.4zM578.62 318.70h2.4v2.4h-2.4zM578.62 363.10h2.4v2.4h-2.4zM578.62 325.03h2.4v2.4h-2.4zM578.62 369.43h2.4v2.4h-2.4zM578.62 331.36h2.4v2.4h-2.4zM578.62 375.76h2.4v2.4h-2.4zM578.62 337.69h2.4v2.4h-2.4zM578.62 382.09h2.4v2.4h-2.4zM578.62 344.02h2.4v2.4h-2.4zM578.62 388.42h2.4v2.4h-2.4zM584.95 318.70h2.4v2.4h-2.4zM584.95 363.10h2.4v2.4h-2.4zM584.95 325.03h2.4v2.4h-2.4zM584.95 369.43h2.4v2.4h-2.4zM584.95 331.36h2.4v2.4h-2.4zM584.95 375.76h2.4v2.4h-2.4zM584.95 337.69h2.4v2.4h-2.4zM584.95 382.09h2.4v2.4h-2.4zM584.95 344.02h2.4v2.4h-2.4zM584.95 388.42h2.4v2.4h-2.4zM591.28 318.70h2.4v2.4h-2.4zM591.28 363.10h2.4v2.4h-2.4zM591.28 325.03h2.4v2.4h-2.4zM591.28 369.43h2.4v2.4h-2.4zM591.28 331.36h2.4v2.4h-2.4zM591.28 375.76h2.4v2.4h-2.4zM591.28 337.69h2.4v2.4h-2.4zM591.28 382.09h2.4v2.4h-2.4zM591.28 344.02h2.4v2.4h-2.4zM591.28 388.42h2.4v2.4h-2.4zM597.61 318.70h2.4v2.4h-2.4zM597.61 363.10h2.4v2.4h-2.4zM597.61 325.03h2.4v2.4h-2.4zM597.61 369.43h2.4v2.4h-2.4zM597.61 331.36h2.4v2.4h-2.4zM597.61 375.76h2.4v2.4h-2.4zM597.61 337.69h2.4v2.4h-2.4zM597.61 382.09h2.4v2.4h-2.4zM597.61 344.02h2.4v2.4h-2.4zM597.61 388.42h2.4v2.4h-2.4zM603.94 318.70h2.4v2.4h-2.4zM603.94 363.10h2.4v2.4h-2.4zM603.94 325.03h2.4v2.4h-2.4zM603.94 369.43h2.4v2.4h-2.4zM603.94 331.36h2.4v2.4h-2.4zM603.94 375.76h2.4v2.4h-2.4zM603.94 337.69h2.4v2.4h-2.4zM603.94 382.09h2.4v2.4h-2.4zM603.94 344.02h2.4v2.4h-2.4zM603.94 388.42h2.4v2.4h-2.4zM610.27 363.10h2.4v2.4h-2.4zM610.27 369.43h2.4v2.4h-2.4zM610.27 375.76h2.4v2.4h-2.4zM610.27 382.09h2.4v2.4h-2.4zM610.27 388.42h2.4v2.4h-2.4zM616.60 363.10h2.4v2.4h-2.4zM616.60 369.43h2.4v2.4h-2.4zM616.60 375.76h2.4v2.4h-2.4zM616.60 382.09h2.4v2.4h-2.4zM616.60 388.42h2.4v2.4h-2.4zM622.93 363.10h2.4v2.4h-2.4zM622.93 369.43h2.4v2.4h-2.4zM622.93 375.76h2.4v2.4h-2.4zM622.93 382.09h2.4v2.4h-2.4zM622.93 388.42h2.4v2.4h-2.4zM629.26 363.10h2.4v2.4h-2.4zM629.26 369.43h2.4v2.4h-2.4zM629.26 375.76h2.4v2.4h-2.4zM629.26 382.09h2.4v2.4h-2.4zM629.26 388.42h2.4v2.4h-2.4z" fill="#353535"/><path d="M426.60 324.93h2.6v2.6h-2.6zM426.60 331.26h2.6v2.6h-2.6zM439.26 324.93h2.6v2.6h-2.6zM439.26 331.26h2.6v2.6h-2.6zM451.92 324.93h2.6v2.6h-2.6zM451.92 331.26h2.6v2.6h-2.6zM464.58 324.93h2.6v2.6h-2.6zM464.58 331.26h2.6v2.6h-2.6zM546.87 318.60h2.6v2.6h-2.6zM546.87 324.93h2.6v2.6h-2.6zM546.87 331.26h2.6v2.6h-2.6zM546.87 337.59h2.6v2.6h-2.6zM546.87 343.92h2.6v2.6h-2.6zM572.19 318.60h2.6v2.6h-2.6zM572.19 324.93h2.6v2.6h-2.6zM572.19 331.26h2.6v2.6h-2.6zM572.19 337.59h2.6v2.6h-2.6zM572.19 343.92h2.6v2.6h-2.6zM610.17 318.60h2.6v2.6h-2.6zM610.17 324.93h2.6v2.6h-2.6zM610.17 331.26h2.6v2.6h-2.6zM610.17 337.59h2.6v2.6h-2.6zM610.17 343.92h2.6v2.6h-2.6zM616.50 318.60h2.6v2.6h-2.6zM616.50 324.93h2.6v2.6h-2.6zM616.50 331.26h2.6v2.6h-2.6zM616.50 337.59h2.6v2.6h-2.6zM616.50 343.92h2.6v2.6h-2.6zM622.83 318.60h2.6v2.6h-2.6zM622.83 324.93h2.6v2.6h-2.6zM622.83 331.26h2.6v2.6h-2.6zM622.83 337.59h2.6v2.6h-2.6zM622.83 343.92h2.6v2.6h-2.6zM629.16 318.60h2.6v2.6h-2.6zM629.16 324.93h2.6v2.6h-2.6zM629.16 331.26h2.6v2.6h-2.6zM629.16 337.59h2.6v2.6h-2.6zM629.16 343.92h2.6v2.6h-2.6z" fill="#2bb52b"/><rect x="237.00" y="311.5" width="2.2" height="3.5" fill="#c8c8c8"/><rect x="237.00" y="395.8" width="2.2" height="3.5" fill="#c8c8c8"/><rect x="262.32" y="311.5" width="2.2" height="3.5" fill="#c8c8c8"/><rect x="262.32" y="395.8" width="2.2" height="3.5" fill="#c8c8c8"/><rect x="293.97" y="311.5" width="2.2" height="3.5" fill="#c8c8c8"/><rect x="293.97" y="395.8" width="2.2" height="3.5" fill="#c8c8c8"/><rect x="325.62" y="311.5" width="2.2" height="3.5" fill="#c8c8c8"/><rect x="325.62" y="395.8" width="2.2" height="3.5" fill="#c8c8c8"/><rect x="357.27" y="311.5" width="2.2" height="3.5" fill="#c8c8c8"/><rect x="357.27" y="395.8" width="2.2" height="3.5" fill="#c8c8c8"/><rect x="388.92" y="311.5" width="2.2" height="3.5" fill="#c8c8c8"/><rect x="388.92" y="395.8" width="2.2" height="3.5" fill="#c8c8c8"/><rect x="420.57" y="311.5" width="2.2" height="3.5" fill="#c8c8c8"/><rect x="420.57" y="395.8" width="2.2" height="3.5" fill="#c8c8c8"/><rect x="452.22" y="311.5" width="2.2" height="3.5" fill="#c8c8c8"/><rect x="452.22" y="395.8" width="2.2" height="3.5" fill="#c8c8c8"/><rect x="483.87" y="311.5" width="2.2" height="3.5" fill="#c8c8c8"/><rect x="483.87" y="395.8" width="2.2" height="3.5" fill="#c8c8c8"/><rect x="515.52" y="311.5" width="2.2" height="3.5" fill="#c8c8c8"/><rect x="515.52" y="395.8" width="2.2" height="3.5" fill="#c8c8c8"/><rect x="547.17" y="311.5" width="2.2" height="3.5" fill="#c8c8c8"/><rect x="547.17" y="395.8" width="2.2" height="3.5" fill="#c8c8c8"/><rect x="578.82" y="311.5" width="2.2" height="3.5" fill="#c8c8c8"/><rect x="578.82" y="395.8" width="2.2" height="3.5" fill="#c8c8c8"/><rect x="610.47" y="311.5" width="2.2" height="3.5" fill="#c8c8c8"/><rect x="610.47" y="395.8" width="2.2" height="3.5" fill="#c8c8c8"/><rect x="231" y="319.40" width="3" height="1.2" fill="#c8c8c8"/><rect x="635.5" y="319.40" width="3" height="1.2" fill="#c8c8c8"/><rect x="231" y="363.80" width="3" height="1.2" fill="#c8c8c8"/><rect x="635.5" y="363.80" width="3" height="1.2" fill="#c8c8c8"/><rect x="231" y="325.73" width="3" height="1.2" fill="#c8c8c8"/><rect x="635.5" y="325.73" width="3" height="1.2" fill="#c8c8c8"/><rect x="231" y="370.13" width="3" height="1.2" fill="#c8c8c8"/><rect x="635.5" y="370.13" width="3" height="1.2" fill="#c8c8c8"/><rect x="231" y="332.06" width="3" height="1.2" fill="#c8c8c8"/><rect x="635.5" y="332.06" width="3" height="1.2" fill="#c8c8c8"/><rect x="231" y="376.46" width="3" height="1.2" fill="#c8c8c8"/><rect x="635.5" y="376.46" width="3" height="1.2" fill="#c8c8c8"/><rect x="231" y="338.39" width="3" height="1.2" fill="#c8c8c8"/><rect x="635.5" y="338.39" width="3" height="1.2" fill="#c8c8c8"/><rect x="231" y="382.79" width="3" height="1.2" fill="#c8c8c8"/><rect x="635.5" y="382.79" width="3" height="1.2" fill="#c8c8c8"/><rect x="231" y="344.72" width="3" height="1.2" fill="#c8c8c8"/><rect x="635.5" y="344.72" width="3" height="1.2" fill="#c8c8c8"/><rect x="231" y="389.12" width="3" height="1.2" fill="#c8c8c8"/><rect x="635.5" y="389.12" width="3" height="1.2" fill="#c8c8c8"/><path d="M341.5 130H500.7L503.9 134V160.3L510.4 168.6V253.9L503.5 262.5H341.5Q339.4 262.5 339.4 260.4V132.1Q339.4 130 341.5 130Z" fill="#10718f"/><rect x="338.5" y="151" width="5" height="34" fill="#b4b4b4"/><rect x="323.9" y="154" width="38.9" height="28.5" fill="#b3b3b3"/><rect x="323.9" y="154" width="5.5" height="28.5" fill="#9d9d9d"/><rect x="345" y="131" width="18.7" height="16" fill="#d5d5d5"/><rect x="343.5" y="133" width="2" height="2" fill="#ddd"/><rect x="343.5" y="143" width="2" height="2" fill="#ddd"/><rect x="363" y="133" width="2" height="2" fill="#ddd"/><rect x="363" y="143" width="2" height="2" fill="#ddd"/><circle cx="354.3" cy="139" r="4.6" fill="#93211f"/><circle cx="377.2" cy="136.7" r="3.9" fill="#fff"/><circle cx="503.9" cy="174.6" r="3.9" fill="#fff"/><circle cx="503.9" cy="244.2" r="3.9" fill="#fff"/><circle cx="374.2" cy="256.7" r="3.9" fill="#fff"/><rect x="375.8" y="142" width="18.9" height="12" rx="1.5" fill="#303030"/><rect x="378.3" y="144.8" width="1.8" height="1.8" fill="#b8a67a"/><rect x="378.3" y="150.6" width="1.8" height="1.8" fill="#b8a67a"/><rect x="384.5" y="144.8" width="1.8" height="1.8" fill="#b8a67a"/><rect x="384.5" y="150.6" width="1.8" height="1.8" fill="#b8a67a"/><rect x="390.7" y="144.8" width="1.8" height="1.8" fill="#b8a67a"/><rect x="390.7" y="150.6" width="1.8" height="1.8" fill="#b8a67a"/><rect x="495.5" y="184.2" width="12.1" height="18.6" rx="1.5" fill="#303030"/><rect x="496.6" y="185.8" width="2.6" height="2.6" rx="0.6" fill="#b8a67a"/><rect x="496.6" y="192.0" width="2.6" height="2.6" rx="0.6" fill="#b8a67a"/><rect x="496.6" y="198.3" width="2.6" height="2.6" rx="0.6" fill="#b8a67a"/><rect x="503.1" y="185.8" width="2.6" height="2.6" rx="0.6" fill="#3aa03a"/><rect x="503.1" y="192.0" width="2.6" height="2.6" rx="0.6" fill="#b8a67a"/><rect x="503.1" y="198.3" width="2.6" height="2.6" rx="0.6" fill="#3aa03a"/><rect x="383.2" y="170.7" width="12.1" height="12.1" fill="#333"/><rect x="409" y="215.7" width="92.1" height="13.2" fill="#333"/><rect x="406" y="158.7" width="6" height="3" fill="#f1e3bd"/><rect x="406" y="170.7" width="6" height="3" fill="#f1e3bd"/><rect x="406" y="176.2" width="6" height="3" fill="#f1e3bd"/><rect x="484" y="170.5" width="7" height="3" fill="#f1e3bd"/><text x="400" y="162.8" font-size="4.5" fill="#cfe3ea">L</text><text x="398" y="174.5" font-size="4.5" fill="#cfe3ea">TX</text><text x="398" y="180" font-size="4.5" fill="#cfe3ea">RX</text><text x="492.5" y="174.2" font-size="4.2" fill="#cfe3ea">ON</text><rect x="405" y="155.2" width="94.7" height="1.4" fill="#9cc3d1"/><path d="M434.4 165.3C431.2 157.2 420.8 157.2 420.8 165.3C420.8 173.4 431.2 173.4 434.4 165.3C437.6 157.2 448 157.2 448 165.3C448 173.4 437.6 173.4 434.4 165.3Z" fill="none" stroke="#fff" stroke-width="2.4"/><rect x="424" y="164.6" width="5" height="1.5" fill="#fff"/><rect x="439.8" y="164.6" width="5" height="1.5" fill="#fff"/><rect x="441.55" y="162.85" width="1.5" height="5" fill="#fff"/><rect x="451.9" y="158.4" width="30" height="14.2" rx="7.1" fill="none" stroke="#fff" stroke-width="0.9"/><text x="455.4" y="170" font-size="11" fill="#fff" letter-spacing="-0.2" textLength="23.5" lengthAdjust="spacingAndGlyphs">UNO</text><text x="420" y="179" font-size="5.2" fill="#fff" letter-spacing="0.35" font-family="Liberation Mono">Arduino</text><text x="451" y="153.2" font-size="3.2" fill="#a9cbd8" letter-spacing="0.3">DIGITAL (PWM~)</text><rect x="398.3" y="141.5" width="1.6" height="11" fill="#7fb0c2" opacity="0.4"/><rect x="404.6" y="141.5" width="1.6" height="8.5" fill="#7fb0c2" opacity="0.4"/><rect x="410.9" y="141.5" width="1.6" height="4.5" fill="#7fb0c2" opacity="0.4"/><rect x="417.2" y="141.5" width="1.6" height="4.5" fill="#7fb0c2" opacity="0.4"/><rect x="423.6" y="141.5" width="1.6" height="4.5" fill="#7fb0c2" opacity="0.4"/><rect x="429.9" y="141.5" width="1.6" height="4.5" fill="#7fb0c2" opacity="0.4"/><rect x="436.2" y="141.5" width="1.6" height="4.5" fill="#7fb0c2" opacity="0.4"/><rect x="442.6" y="141.5" width="1.6" height="4.5" fill="#7fb0c2" opacity="0.4"/><rect x="452.4" y="141.5" width="1.6" height="3.5" fill="#7fb0c2" opacity="0.4"/><rect x="458.7" y="141.5" width="1.6" height="3.5" fill="#7fb0c2" opacity="0.4"/><rect x="465.1" y="141.5" width="1.6" height="3.5" fill="#7fb0c2" opacity="0.4"/><rect x="471.4" y="141.5" width="1.6" height="3.5" fill="#7fb0c2" opacity="0.4"/><rect x="477.7" y="141.5" width="1.6" height="3.5" fill="#7fb0c2" opacity="0.4"/><rect x="484.0" y="141.5" width="1.6" height="3.5" fill="#7fb0c2" opacity="0.4"/><rect x="490.4" y="141.5" width="1.6" height="13" fill="#7fb0c2" opacity="0.4"/><rect x="496.7" y="141.5" width="1.6" height="13" fill="#7fb0c2" opacity="0.4"/><text x="376" y="159.5" font-size="4" fill="#b9d3dc" letter-spacing="0.3">ICSP2</text><text x="348" y="151" font-size="3.6" fill="#b9d3dc" letter-spacing="0.3">RESET</text><rect x="383" y="133.6" width="63.5" height="6.1" fill="#333"/><rect x="450.7" y="133.6" width="50.3" height="6.1" fill="#333"/><circle cx="386.4" cy="136.6" r="1.6" fill="#156815" stroke="#3d8a3d" stroke-width="0.6"/><circle cx="392.7" cy="136.6" r="1.6" fill="#156815" stroke="#3d8a3d" stroke-width="0.6"/><rect x="397.7" y="135.2" width="2.8" height="2.8" fill="#0b0b0b"/><circle cx="405.4" cy="136.6" r="1.6" fill="#156815" stroke="#3d8a3d" stroke-width="0.6"/><rect x="410.3" y="135.2" width="2.8" height="2.8" fill="#0b0b0b"/><rect x="416.6" y="135.2" width="2.8" height="2.8" fill="#0b0b0b"/><rect x="423.0" y="135.2" width="2.8" height="2.8" fill="#0b0b0b"/><rect x="429.3" y="135.2" width="2.8" height="2.8" fill="#0b0b0b"/><rect x="435.6" y="135.2" width="2.8" height="2.8" fill="#0b0b0b"/><rect x="442.0" y="135.2" width="2.8" height="2.8" fill="#0b0b0b"/><rect x="451.8" y="135.2" width="2.8" height="2.8" fill="#0b0b0b"/><rect x="458.1" y="135.2" width="2.8" height="2.8" fill="#0b0b0b"/><rect x="464.5" y="135.2" width="2.8" height="2.8" fill="#0b0b0b"/><rect x="470.8" y="135.2" width="2.8" height="2.8" fill="#0b0b0b"/><rect x="477.1" y="135.2" width="2.8" height="2.8" fill="#0b0b0b"/><circle cx="484.8" cy="136.6" r="1.6" fill="#156815" stroke="#3d8a3d" stroke-width="0.6"/><rect x="489.8" y="135.2" width="2.8" height="2.8" fill="#0b0b0b"/><rect x="496.1" y="135.2" width="2.8" height="2.8" fill="#0b0b0b"/><rect x="349.7" y="215.5" width="5" height="8.5" fill="#a7a7a7"/><rect x="354.4" y="211.5" width="8.6" height="16.3" fill="#2e2e2e"/><rect x="363" y="212.8" width="4.5" height="2.4" fill="#a7a7a7"/><rect x="363" y="218.8" width="4.5" height="2.4" fill="#a7a7a7"/><rect x="363" y="224.8" width="4.5" height="2.4" fill="#a7a7a7"/><rect x="335.3" y="232.4" width="32.7" height="22.2" fill="#232323"/><rect x="335.3" y="232.4" width="6.5" height="22.2" fill="#1a1a1a"/><rect x="377.1" y="231.5" width="16.4" height="16.5" fill="#2f2f2f"/><circle cx="385.3" cy="239.3" r="7.9" fill="#e6e6e6"/><path d="M378.1 243.2 A7.9 7.9 0 0 0 392.5 243.2Z" fill="#111"/><rect x="394.8" y="231.5" width="16.4" height="16.5" fill="#2f2f2f"/><circle cx="403" cy="239.3" r="7.9" fill="#e6e6e6"/><path d="M395.8 243.2 A7.9 7.9 0 0 0 410.2 243.2Z" fill="#111"/><rect x="424" y="240.8" width="32" height="1.3" fill="#9cc3d1"/><rect x="464" y="240.8" width="36" height="1.3" fill="#9cc3d1"/><text x="478" y="239.5" font-size="3.4" fill="#a9cbd8" letter-spacing="0.25">ANALOG IN</text><rect x="414.7" y="245" width="1.2" height="5" fill="#8fb9c9" opacity="0.55"/><rect x="421.1" y="245" width="1.2" height="5" fill="#8fb9c9" opacity="0.55"/><rect x="427.4" y="245" width="1.2" height="5" fill="#8fb9c9" opacity="0.55"/><rect x="433.7" y="245" width="1.2" height="5" fill="#8fb9c9" opacity="0.55"/><rect x="440.0" y="245" width="1.2" height="5" fill="#8fb9c9" opacity="0.55"/><rect x="446.4" y="245" width="1.2" height="5" fill="#8fb9c9" opacity="0.55"/><rect x="452.7" y="245" width="1.2" height="5" fill="#8fb9c9" opacity="0.55"/><rect x="465.4" y="246" width="1.2" height="4" fill="#8fb9c9" opacity="0.55"/><rect x="471.7" y="246" width="1.2" height="4" fill="#8fb9c9" opacity="0.55"/><rect x="478.1" y="246" width="1.2" height="4" fill="#8fb9c9" opacity="0.55"/><rect x="484.4" y="246" width="1.2" height="4" fill="#8fb9c9" opacity="0.55"/><rect x="490.7" y="246" width="1.2" height="4" fill="#8fb9c9" opacity="0.55"/><rect x="497.0" y="246" width="1.2" height="4" fill="#8fb9c9" opacity="0.55"/><rect x="406.25" y="253.9" width="50.45" height="5.5" fill="#333"/><rect x="463.2" y="253.9" width="37.9" height="5.5" fill="#333"/><rect x="407.6" y="255.3" width="2.8" height="2.8" fill="#0b0b0b"/><rect x="413.9" y="255.3" width="2.8" height="2.8" fill="#0b0b0b"/><rect x="420.3" y="255.3" width="2.8" height="2.8" fill="#0b0b0b"/><circle cx="428.0" cy="256.7" r="1.6" fill="#156815" stroke="#3d8a3d" stroke-width="0.6"/><circle cx="434.3" cy="256.7" r="1.6" fill="#156815" stroke="#3d8a3d" stroke-width="0.6"/><circle cx="440.6" cy="256.7" r="1.6" fill="#156815" stroke="#3d8a3d" stroke-width="0.6"/><circle cx="447.0" cy="256.7" r="1.6" fill="#156815" stroke="#3d8a3d" stroke-width="0.6"/><rect x="451.9" y="255.3" width="2.8" height="2.8" fill="#0b0b0b"/><rect x="464.6" y="255.3" width="2.8" height="2.8" fill="#0b0b0b"/><rect x="470.9" y="255.3" width="2.8" height="2.8" fill="#0b0b0b"/><rect x="477.3" y="255.3" width="2.8" height="2.8" fill="#0b0b0b"/><rect x="483.6" y="255.3" width="2.8" height="2.8" fill="#0b0b0b"/><circle cx="491.3" cy="256.7" r="1.6" fill="#156815" stroke="#3d8a3d" stroke-width="0.6"/><circle cx="497.6" cy="256.7" r="1.6" fill="#156815" stroke="#3d8a3d" stroke-width="0.6"/><rect x="610.9" y="306" width="1.4" height="20" fill="#a9a9a9"/><rect x="617.0999999999999" y="306" width="1.4" height="20" fill="#a9a9a9"/><rect x="623.4" y="306" width="1.4" height="20" fill="#a9a9a9"/><rect x="629.9" y="306" width="1.4" height="20" fill="#a9a9a9"/><rect x="605.3" y="268.6" width="31.9" height="39.1" rx="2.5" fill="#419fd8"/><g fill="#1d2a36"><rect x="610.9" y="270.8" width="3.2" height="6.2" rx="0.6"/><rect x="616.6999999999999" y="270.8" width="3.2" height="6.2" rx="0.6"/><rect x="622.6999999999999" y="270.8" width="3.2" height="6.2" rx="0.6"/><rect x="605.5" y="279.3" width="4.5" height="2.4" rx="0.5"/><rect x="632" y="279.3" width="4.5" height="2.4" rx="0.5"/><rect x="610.8" y="279.3" width="3.4" height="2.4" rx="0.5"/><rect x="616.5999999999999" y="279.3" width="3.4" height="2.4" rx="0.5"/><rect x="622.5999999999999" y="279.3" width="3.4" height="2.4" rx="0.5"/><rect x="605.5" y="284.3" width="4.5" height="2.4" rx="0.5"/><rect x="632" y="284.3" width="4.5" height="2.4" rx="0.5"/><rect x="610.8" y="284.3" width="3.4" height="2.4" rx="0.5"/><rect x="616.5999999999999" y="284.3" width="3.4" height="2.4" rx="0.5"/><rect x="622.5999999999999" y="284.3" width="3.4" height="2.4" rx="0.5"/><rect x="605.5" y="289.3" width="4.5" height="2.4" rx="0.5"/><rect x="632" y="289.3" width="4.5" height="2.4" rx="0.5"/><rect x="610.8" y="289.3" width="3.4" height="2.4" rx="0.5"/><rect x="616.5999999999999" y="289.3" width="3.4" height="2.4" rx="0.5"/><rect x="622.5999999999999" y="289.3" width="3.4" height="2.4" rx="0.5"/><rect x="605.5" y="294.3" width="4.5" height="2.4" rx="0.5"/><rect x="632" y="294.3" width="4.5" height="2.4" rx="0.5"/><rect x="610.8" y="294.3" width="3.4" height="2.4" rx="0.5"/><rect x="616.5999999999999" y="294.3" width="3.4" height="2.4" rx="0.5"/><rect x="622.5999999999999" y="294.3" width="3.4" height="2.4" rx="0.5"/><rect x="605.5" y="299.40000000000003" width="4.5" height="2.4" rx="0.5"/><rect x="632" y="299.40000000000003" width="4.5" height="2.4" rx="0.5"/><rect x="610.8" y="299.40000000000003" width="3.4" height="2.4" rx="0.5"/><rect x="616.5999999999999" y="299.40000000000003" width="3.4" height="2.4" rx="0.5"/><rect x="622.5999999999999" y="299.40000000000003" width="3.4" height="2.4" rx="0.5"/></g><rect x="610.8" y="278.2" width="3.4" height="1" fill="#b8c4a0" opacity="0.7"/><rect x="616.5999999999999" y="278.2" width="3.4" height="1" fill="#b8c4a0" opacity="0.7"/><rect x="610.8" y="283.2" width="3.4" height="1" fill="#b8c4a0" opacity="0.7"/><rect x="616.5999999999999" y="283.2" width="3.4" height="1" fill="#b8c4a0" opacity="0.7"/><rect x="610.8" y="288.2" width="3.4" height="1" fill="#b8c4a0" opacity="0.7"/><rect x="616.5999999999999" y="288.2" width="3.4" height="1" fill="#b8c4a0" opacity="0.7"/><rect x="610.8" y="293.2" width="3.4" height="1" fill="#b8c4a0" opacity="0.7"/><rect x="616.5999999999999" y="293.2" width="3.4" height="1" fill="#b8c4a0" opacity="0.7"/><rect x="610.8" y="298.3" width="3.4" height="1" fill="#b8c4a0" opacity="0.7"/><rect x="616.5999999999999" y="298.3" width="3.4" height="1" fill="#b8c4a0" opacity="0.7"/><rect x="548.6" y="325.6" width="25" height="1.2" fill="#9a9a9a"/><rect x="553.3" y="323.4" width="15.6" height="5.6" rx="2.2" fill="#d9b27c"/><rect x="555.2" y="323.4" width="1.6" height="5.6" fill="#7b3f16"/><rect x="557.8000000000001" y="323.4" width="1.6" height="5.6" fill="#111"/><rect x="560.5" y="323.4" width="1.6" height="5.6" fill="#ee6a10"/><rect x="564.8000000000001" y="323.4" width="1.6" height="5.6" fill="#b8923c"/><path d="M739.4 305.6H805.75V305.6L812.5 305.6A7.3 7.3 0 0 1 819.4 313V315Q819.4 320.2 814.2 320.2H805.75V377.9H814.2Q819.4 377.9 819.4 383.1V385.2A7.3 7.3 0 0 1 812.5 392.5H739.4A8 8 0 0 1 731.4 384.5V313.6A8 8 0 0 1 739.4 305.6Z" fill="#1d5fc6"/><rect x="793.4" y="305.6" width="12.35" height="86.9" fill="#4a6fab"/><rect x="747.8" y="306.8" width="45.6" height="83.9" fill="#1f1119"/><rect x="752" y="311.8" width="37" height="74" fill="#343434"/><text transform="translate(773.9 374.8) rotate(-90)" font-size="8" textLength="42.4" lengthAdjust="spacingAndGlyphs" fill="#ececec">128x64 OLED</text><rect x="795.2" y="330.5" width="11.5" height="36.5" rx="1.5" fill="#050505"/><rect x="805.5" y="332" width="2" height="2.5" fill="#e0a040"/><rect x="805.5" y="363" width="2" height="2.5" fill="#e0a040"/><circle cx="738.3" cy="312.7" r="4.2" fill="#b9b9b9"/><circle cx="738.3" cy="312.7" r="3.1" fill="#fff"/><circle cx="738.3" cy="384.7" r="4.2" fill="#b9b9b9"/><circle cx="738.3" cy="384.7" r="3.1" fill="#fff"/><circle cx="812.5" cy="312.7" r="4.2" fill="#b9b9b9"/><circle cx="812.5" cy="312.7" r="3.1" fill="#fff"/><circle cx="812.5" cy="384.7" r="4.2" fill="#b9b9b9"/><circle cx="812.5" cy="384.7" r="3.1" fill="#fff"/><text x="736.2" y="323.8" font-size="6" fill="#fff">★</text><circle cx="738.7" cy="326.9" r="2" fill="#2a8a2a"/><rect x="743.5" y="325.09999999999997" width="1.2" height="3.6" fill="#9fb8e8"/><circle cx="738.7" cy="332.9" r="1.8" fill="#ef8f86"/><rect x="743.5" y="331.09999999999997" width="1.2" height="3.6" fill="#9fb8e8"/><circle cx="738.7" cy="339.1" r="2" fill="#2a8a2a"/><rect x="743.5" y="337.3" width="1.2" height="3.6" fill="#9fb8e8"/><circle cx="738.7" cy="345.5" r="1.8" fill="#ef8f86"/><rect x="743.5" y="343.7" width="1.2" height="3.6" fill="#9fb8e8"/><circle cx="738.7" cy="351.8" r="1.8" fill="#ef8f86"/><rect x="743.5" y="350.0" width="1.2" height="3.6" fill="#9fb8e8"/><circle cx="738.7" cy="358.1" r="1.8" fill="#ef8f86"/><rect x="743.5" y="356.3" width="1.2" height="3.6" fill="#9fb8e8"/><circle cx="738.7" cy="364.3" r="2" fill="#2a8a2a"/><rect x="743.5" y="362.5" width="1.2" height="3.6" fill="#9fb8e8"/><circle cx="738.7" cy="370.6" r="2" fill="#2a8a2a"/><rect x="743.5" y="368.8" width="1.2" height="3.6" fill="#9fb8e8"/><path d="M548.6 332.6 L611.6 332.6" fill="none" stroke="#bf0d0d" stroke-width="2.8" stroke-linejoin="miter" stroke-linecap="round"/><path d="M573.6 338.9 L617.8 338.9" fill="none" stroke="#f4ea0e" stroke-width="2.8" stroke-linejoin="miter" stroke-linecap="round"/><path d="M463.3 330.5V367.2H738.7M468.5 330.5V361.8H738.7" fill="none" stroke="#333" stroke-width="0.8" stroke-dasharray="1.6 1.2"/><path d="M497.6 256.7 L497.6 282.5 L465.9 282.5 L465.9 326.2" fill="none" stroke="#e06c12" stroke-width="2.85" stroke-linejoin="miter" stroke-linecap="round"/><path d="M465.9 332.6 L465.9 364.5 L738.7 364.3" fill="none" stroke="#e06c12" stroke-width="2.85" stroke-linejoin="miter" stroke-linecap="round"/><path d="M491.3 256.7 L491.3 269.5 L453.75 269.5 L453.75 326.2" fill="none" stroke="#1fbf2a" stroke-width="2.85" stroke-linejoin="miter" stroke-linecap="round"/><path d="M453.75 332.6 L453.75 376.8 L738.7 370.6" fill="none" stroke="#1fbf2a" stroke-width="2.85" stroke-linejoin="miter" stroke-linecap="round"/><path d="M440.9 256.7 L440.9 326.2" fill="none" stroke="#222222" stroke-width="2.85" stroke-linejoin="miter" stroke-linecap="round"/><path d="M440.9 332.6 L440.9 395.9 L693.7 395.9 L693.7 326.9 L738.7 326.9" fill="none" stroke="#222222" stroke-width="2.85" stroke-linejoin="miter" stroke-linecap="round"/><path d="M428.3 256.7 L428.3 326.2" fill="none" stroke="#bf0d0d" stroke-width="2.85" stroke-linejoin="miter" stroke-linecap="round"/><path d="M428.3 332.6 L428.3 408.9 L643.4 408.9 L643.4 339.1 L738.7 339.1" fill="none" stroke="#bf0d0d" stroke-width="2.85" stroke-linejoin="miter" stroke-linecap="round"/><path d="M434.3 256.7 L434.3 225 L611.7 225 L611.7 326.2" fill="none" stroke="#bf0d0d" stroke-width="2.85" stroke-linejoin="miter" stroke-linecap="round"/><path d="M447 256.7 L447 231.1 L630.6 231.1 L630.6 326.2" fill="none" stroke="#222222" stroke-width="2.85" stroke-linejoin="miter" stroke-linecap="round"/><path d="M484.85 136.6 L618 136.6 L618 326.2" fill="none" stroke="#f4ea0e" stroke-width="2.85" stroke-linejoin="miter" stroke-linecap="round"/><circle cx="541.9" cy="395.9" r="1.8" fill="#000"/><circle cx="611.6" cy="395.9" r="1.8" fill="#000"/><circle cx="662.5" cy="395.9" r="1.8" fill="#000"/><circle cx="675.3" cy="395.9" r="1.8" fill="#000"/><circle cx="440.9" cy="395.9" r="1.8" fill="#000"/><circle cx="693.7" cy="395.9" r="1.8" fill="#000"/><circle cx="693.7" cy="326.9" r="1.8" fill="#000"/><circle cx="447" cy="231.1" r="1.8" fill="#000"/><circle cx="630.6" cy="231.1" r="1.8" fill="#000"/><circle cx="523" cy="408.9" r="1.8" fill="#a00"/><circle cx="428.3" cy="408.9" r="1.8" fill="#a00"/><circle cx="643.4" cy="408.9" r="1.8" fill="#a00"/><circle cx="434.3" cy="225" r="1.8" fill="#a00"/><circle cx="611.7" cy="225" r="1.8" fill="#a00"/><circle cx="643.4" cy="339.1" r="1.8" fill="#a00"/><circle cx="428" cy="256.7" r="1.5" fill="#2a8a2a" opacity="0.8"/><circle cx="434.3" cy="256.7" r="1.5" fill="#2a8a2a" opacity="0.8"/><circle cx="440.6" cy="256.7" r="1.5" fill="#2a8a2a" opacity="0.8"/><circle cx="447" cy="256.7" r="1.5" fill="#2a8a2a" opacity="0.8"/><circle cx="491.3" cy="256.7" r="1.5" fill="#2a8a2a" opacity="0.8"/><circle cx="497.6" cy="256.7" r="1.5" fill="#2a8a2a" opacity="0.8"/><circle cx="484.85" cy="136.6" r="1.5" fill="#2a8a2a" opacity="0.8"/></svg></div>
<div class="a" id="vscroll"></div><div class="a" id="vthumb"></div>
<div class="a" id="hscroll"></div><div class="a" id="hthumb"></div>
<div class="a" style="left:14px;top:498px;width:849px;height:45px;background:#d43220"></div><div class="a" style="left:14px;top:542px;width:849px;height:2px;background:#6e2019"></div><div class="a" style="left:14px;top:498px;width:849px;height:1px;background:#d9503f"></div><div class="t" style="left:33.8px;top:525.5px;font-size:8.3px;color:#f8d9d3">Notiz</div><div class="t" style="left:89.2px;top:526px;font-size:7.55px;font-weight:bold;color:#fbe6e2">Drehen</div><div class="t" style="left:142px;top:526px;font-size:7.5px;font-weight:bold;color:#fbe6e2">Umdrehen</div><div class="t" style="left:411.3px;top:507.3px;font-size:10.9px;color:#f0a394">Routing fertiggestellt</div><div class="a" style="left:735.4px;top:502px;width:55px;height:37px;background:#3b97b0"></div><div class="a" style="left:735.4px;top:535.7px;width:55px;height:3.3px;background:#215c6e"></div><div class="t" style="left:744.2px;top:524.8px;font-size:7.8px;color:#e6f3f6">Simulieren</div><div class="a" style="left:800.6px;top:502px;width:55.4px;height:37px;background:#10a35a"></div><div class="a" style="left:800.6px;top:535.7px;width:55.4px;height:3.3px;background:#0a6a38"></div><div class="t" style="left:801.3px;top:524.8px;font-size:8px;color:#dcf3e4">Veröffentlichen</div><svg width="1024" height="576" viewBox="0 0 1024 576" style="left:0;top:0"><path d="M35.6 504.2H46L50.4 508.6V518H35.6Z" fill="none" stroke="#fff" stroke-width="1.5" stroke-linejoin="miter"/><path d="M46 504.2V508.6H50.4" fill="none" stroke="#fff" stroke-width="1.2"/><path d="M100.6 503.6A6.9 6.9 0 1 0 106.3 513.2Q107.2 511 107.2 507.4" fill="none" stroke="#b0acab" stroke-width="1.5"/><path d="M103.2 511.2L107.2 507L111.6 511.2" fill="none" stroke="#b0acab" stroke-width="1.5" stroke-linejoin="round"/><circle cx="124.4" cy="504.6" r="4.1" fill="#a9837e"/><path d="M122.4 503.6H126.4L124.4 506.2Z" fill="#fff"/><path d="M152.9 510.9L157.8 514.3L152.9 517.8Z" fill="#b0acab"/><path d="M168 510.9L163.2 514.3L168 517.8Z" fill="#b0acab"/><path d="M160.6 509.2V518.5" stroke="#b0acab" stroke-width="0.8"/><path d="M156.4 507.3Q161 502.6 166 506.8" fill="none" stroke="#b0acab" stroke-width="1.4"/><path d="M166.3 503.8V507.4H162.7" fill="none" stroke="#b0acab" stroke-width="1.4"/><circle cx="183.2" cy="504.6" r="4.1" fill="#a9837e"/><path d="M181.2 503.6H185.2L183.2 506.2Z" fill="#fff"/><circle cx="762.8" cy="512.9" r="7.2" fill="none" stroke="#fff" stroke-width="1.3"/><path d="M760.5 508.8V517L766.8 512.9Z" fill="none" stroke="#fff" stroke-width="1.2" stroke-linejoin="round"/><circle cx="785.2" cy="507.5" r="3.7" fill="#234550"/><path d="M783.3 506.5H787.1L785.2 509Z" fill="#fff"/><path d="M817 518.5V513.5Q817 510.5 820 510.5H824" fill="none" stroke="#fff" stroke-width="1.4"/><path d="M822.3 508L825 510.5L822.3 513" fill="none" stroke="#fff" stroke-width="1.3"/><rect x="827.5" y="506.8" width="4.5" height="4.5" fill="none" stroke="#fff" stroke-width="1.2"/><rect x="827.5" y="513.2" width="4.5" height="4.5" fill="none" stroke="#fff" stroke-width="1.2"/><rect x="834" y="506.8" width="4.5" height="4.5" fill="none" stroke="#fff" stroke-width="1.2"/><rect x="834" y="513.2" width="4.5" height="4.5" fill="none" stroke="#fff" stroke-width="1.2"/></svg>
<div class="a" style="left:862px;top:47px;width:1px;height:497px;background:#8a8a8a"></div><div class="a" style="left:863px;top:47px;width:2px;height:497px;background:#5e5e5e"></div><div class="a" style="left:865px;top:47px;width:159px;height:497px;background:#d9d9d9"></div><div class="t" style="left:870.8px;top:49.5px;font-size:9.3px;color:#8a8a8a">Bauteile</div><div class="a" style="left:865px;top:61px;width:159px;height:1px;background:#bcbcbc"></div><div class="a" style="left:865px;top:62px;width:21.2px;height:224.7px;background:#b4b4b4"></div><div class="t" style="left:892px;top:68.5px;font-size:9.4px;font-weight:bold;color:#2a2a2a">Temp</div><div class="a" style="left:886px;top:82px;width:138px;height:1px;background:#bcbcbc"></div><div class="a" style="left:865px;top:286.7px;width:21.2px;height:22.6px;background:#e0e0e0"></div><div class="t" style="left:867.6px;top:294.8px;font-size:6.3px;font-weight:bold;color:#111">TEMP</div><div class="a" style="left:865px;top:309.3px;width:21.2px;height:19.5px;background:#cfcfcf"></div><div class="a" style="left:865px;top:329.5px;width:159px;height:2.5px;background:#5b5b5b"></div><div class="t" style="left:870.5px;top:334px;font-size:9.7px;color:#8a8a8a">Inspektor</div><div class="a" style="left:868.6px;top:348.8px;width:156px;height:15.2px;background:#aaaaae"></div><div class="t" style="left:870px;top:351.3px;font-size:9.85px;font-weight:bold;color:#111">Breadboard1</div><div class="a" style="left:922.9px;top:374px;width:47.9px;height:47.9px;background:#fff"></div><div class="a" style="left:974.2px;top:374px;width:47.8px;height:47.9px;background:#fff"></div><div class="t" style="left:870.6px;top:429.8px;font-size:7.3px;color:#444">Breadboard1</div><div class="t" style="left:870px;top:444.6px;font-size:7.4px;font-weight:bold;color:#d93a2b">Platzierung</div><div class="a" style="left:868px;top:455px;width:156px;height:1px;background:#c6c6c6"></div><div class="a" style="left:868px;top:469.2px;width:156px;height:1px;background:#c6c6c6"></div><div class="a" style="left:868px;top:482.2px;width:156px;height:1px;background:#c6c6c6"></div><div class="a" style="left:868px;top:511px;width:156px;height:1px;background:#c6c6c6"></div><div class="a" style="left:868px;top:526px;width:156px;height:1px;background:#c6c6c6"></div><div class="a" style="left:868px;top:539.6px;width:156px;height:1px;background:#c6c6c6"></div><div class="t" style="left:870px;top:459px;font-size:7.45px;color:#444">Position</div><div class="a" style="left:913px;top:457.7px;width:38.7px;height:10.5px;background:#ececec"></div><div class="a" style="left:941px;top:457.7px;width:10.7px;height:10.5px;background:#fff"></div><div class="t" style="left:914.6px;top:459.5px;font-size:7.4px;color:#222">0.548</div><div class="a" style="left:956.9px;top:457.7px;width:38.1px;height:10.5px;background:#ececec"></div><div class="a" style="left:984.5px;top:457.7px;width:10.5px;height:10.5px;background:#fff"></div><div class="t" style="left:958.5px;top:459.5px;font-size:7.4px;color:#222">1.100</div><div class="t" style="left:998.5px;top:459px;font-size:7.4px;color:#222">in</div><div class="t" style="left:870px;top:472px;font-size:7.45px;color:#444">Drehung</div><div class="a" style="left:913px;top:470.7px;width:38.7px;height:10.5px;background:#ececec"></div><div class="a" style="left:941px;top:470.7px;width:10.7px;height:10.5px;background:#fff"></div><div class="t" style="left:914.6px;top:472.5px;font-size:7.4px;color:#222">0.0</div><div class="t" style="left:956.9px;top:472px;font-size:7.4px;color:#222">Grad</div><svg width="1024" height="576" viewBox="0 0 1024 576" style="left:0;top:0"><path d="M944.3 462.2L946.3 459.5L948.3 462.2ZM944.3 463.8L946.3 466.5L948.3 463.8Z" fill="#9a9a9a"/><path d="M987.7 462.2L989.7 459.5L991.7 462.2ZM987.7 463.8L989.7 466.5L991.7 463.8Z" fill="#9a9a9a"/><path d="M944.3 475.2L946.3 472.5L948.3 475.2ZM944.3 476.8L946.3 479.5L948.3 476.8Z" fill="#9a9a9a"/><path d="M872 316.5L875.5 312.5L879 316.5Z" fill="#b5b5b5"/><path d="M872 322L875.5 326L879 322Z" fill="#b5b5b5"/><rect x="1016.5" y="52.5" width="6" height="4" rx="1" fill="none" stroke="#777" stroke-width="1.2"/><rect x="1016.5" y="336.5" width="6" height="4" rx="1" fill="none" stroke="#777" stroke-width="1.2"/><circle cx="898" cy="375" r="1.3" fill="#333"/><circle cx="898" cy="383.3" r="1.3" fill="#333"/><circle cx="907.5" cy="375" r="1.3" fill="#333"/><circle cx="907.5" cy="383.3" r="1.3" fill="#333"/><circle cx="917" cy="375" r="1.3" fill="#333"/><circle cx="917" cy="383.3" r="1.3" fill="#333"/><rect x="871" y="391.5" width="48" height="0.8" fill="#bdbdbd"/><circle cx="881" cy="410.4" r="1.3" fill="#333"/><circle cx="881" cy="419.2" r="1.3" fill="#333"/><circle cx="890" cy="410.4" r="1.3" fill="#333"/><circle cx="890" cy="419.2" r="1.3" fill="#333"/><circle cx="899" cy="410.4" r="1.3" fill="#333"/><circle cx="899" cy="419.2" r="1.3" fill="#333"/><circle cx="908" cy="410.4" r="1.3" fill="#333"/><circle cx="908" cy="419.2" r="1.3" fill="#333"/><circle cx="917" cy="410.4" r="1.3" fill="#333"/><circle cx="917" cy="419.2" r="1.3" fill="#333"/><text x="872.5" y="412.5" font-size="5" fill="#bbb">A</text><text x="872.5" y="421.3" font-size="5" fill="#bbb">B</text><text x="898" y="404" font-size="4.5" fill="#bbb">1</text><path d="M913.3 492.5V485.8H920.4" fill="none" stroke="#e8e8e8" stroke-width="0.8"/><path d="M920.4 485.8V492.5H913.3" fill="none" stroke="#c8c8c8" stroke-width="0.6"/><rect x="867" y="62" width="18" height="7.5" fill="#3a3a3a"/><path d="M869 66Q872 62 875 65T881 64" fill="none" stroke="#777" stroke-width="0.7"/><path d="M868.5 69.5h2v1h-2zM873.5 69.5h2v1h-2zM878.5 69.5h2v1h-2z" fill="#3a3a3a"/><path d="M871 75.5H881Q883.5 75.5 883.5 78V86Q883.5 89.5 879 90.5L876.5 93.5L874.5 90.5Q869 89.5 869 86V78Q869 75.5 871 75.5Z" fill="#3a3a3a"/><path d="M871 80H881M871 82.5H881M871 85H881" stroke="#5a5a5a" stroke-width="0.8"/><rect x="867" y="99.5" width="18" height="13.5" fill="#3a3a3a"/><path d="M868.5 98h2v1.5h-2zM873.5 98h2v1.5h-2zM878.5 98h2v1.5h-2zM868.5 113h2v1.5h-2zM873.5 113h2v1.5h-2zM878.5 113h2v1.5h-2z" fill="#3a3a3a"/><path d="M869 108H872V103H876V109H879V104H883" fill="none" stroke="#777" stroke-width="0.8"/><rect x="867.5" y="127.3" width="17" height="1.2" fill="#3a3a3a"/><rect x="871" y="125.5" width="10" height="4.8" rx="1" fill="#3a3a3a"/><rect x="867.7" y="140.2" width="16.3" height="16.2" fill="#3a3a3a"/><circle cx="875.9" cy="148.3" r="4.3" fill="#6a6a6a"/><circle cx="869.5" cy="142" r="0.9" fill="#111"/><circle cx="882.2" cy="142" r="0.9" fill="#111"/><circle cx="869.5" cy="154.6" r="0.9" fill="#111"/><circle cx="882.2" cy="154.6" r="0.9" fill="#111"/><circle cx="872.5" cy="172" r="0.9" fill="#444"/><circle cx="876" cy="172" r="0.9" fill="#444"/><circle cx="879.5" cy="172" r="0.9" fill="#444"/><rect x="868" y="183.5" width="16.8" height="10.8" rx="1" fill="#3a3a3a"/><circle cx="876.5" cy="184.8" r="0.8" fill="#ddd"/><path d="M869.5 194.5v2.5M872.5 194.5v2.5M875.5 194.5v2.5M878.5 194.5v2.5M881.5 194.5v2.5" stroke="#8a8a8a" stroke-width="0.6"/><g fill="none" stroke="#3a3a3a" stroke-width="1"><circle cx="876" cy="211.5" r="8.2"/><circle cx="876" cy="211.5" r="5.8"/><circle cx="876" cy="211.5" r="3.4"/></g><circle cx="876" cy="211.5" r="1.4" fill="#3a3a3a"/><path d="M876 212V222M872.5 222.5H879.5" stroke="#3a3a3a" stroke-width="1.2"/><path d="M867.5 238V234.5Q867.5 232.5 869.5 232.5H871M884.5 238V234.5Q884.5 232.5 882.5 232.5H881" fill="none" stroke="#3a3a3a" stroke-width="1.3"/><rect x="871" y="231" width="10" height="6.5" rx="2" fill="#3a3a3a"/><circle cx="876" cy="234.2" r="1.5" fill="#bbb"/><path d="M872.5 249.7H879.5L883 255.2L879.5 260.7H872.5L869 255.2Z" fill="#3a3a3a"/><path d="M870.5 270.5Q867 274 868.5 279.5Q870 283.5 873.5 282.8Q876 282 876 277Q876 282 878.5 282.8Q882 283.5 883.5 279.5Q885 274 881.5 270.5" fill="none" stroke="#8c8c8c" stroke-width="1.5"/><rect x="890.9" y="84.9" width="27.3" height="28" rx="3" fill="#1b5fce"/><rect x="890.9" y="90.1" width="27.3" height="14.8" fill="#1f1119"/><rect x="892.9" y="91.9" width="23.4" height="11.2" fill="#353535"/><rect x="896" y="96.8" width="11" height="0.8" fill="#bbb"/><rect x="890.9" y="104.9" width="27.3" height="3.4" fill="#4a6fab"/><rect x="895.5" y="108.3" width="18" height="4.6" fill="#fff"/><rect x="899" y="104.9" width="11.5" height="3.8" rx="1.2" fill="#050505"/><circle cx="893" cy="87.6" r="1.1" fill="#fff"/><circle cx="916.1" cy="87.6" r="1.1" fill="#fff"/><circle cx="893" cy="110.4" r="1.1" fill="#fff"/><circle cx="916.1" cy="110.4" r="1.1" fill="#fff"/><path d="M897 87.6H912" stroke="#cfe0ff" stroke-width="0.9" stroke-dasharray="1 1"/><rect x="923.3" y="86.5" width="29.1" height="29" fill="#fff" stroke="#8b1d3e" stroke-width="1.3"/><rect x="928.3" y="87.2" width="15.1" height="17.7" rx="1.2" fill="#419fd8"/><path d="M928.5 92H943M928.5 94.5H943M928.5 97H943M928.5 99.5H943M928.5 102H943" stroke="#1d2a36" stroke-width="0.9" stroke-dasharray="2 1.5 1.5 1.5 1.5 1.5 2"/><rect x="933" y="88" width="6" height="2" fill="#1d2a36"/><path d="M931.5 105V110.5M934 105V110.5M936.5 105V110.5M939 105V110.5" stroke="#aaa" stroke-width="0.7"/></svg><div class="a" style="left:913px;top:527px;width:111px;height:12.4px;background:#ececec"></div><svg width="1024" height="576" viewBox="0 0 1024 576" style="left:0;top:0"><path d="M1016.5 531.5H1022L1019.25 535.5Z" fill="#999"/></svg><div class="t" style="left:870px;top:486px;font-size:7px;color:#444;left:924px">Gesperrt</div><div class="t" style="left:870px;top:500.3px;font-size:7.3px;font-weight:bold;color:#d93a2b">Eigenschaften</div><div class="t" style="left:870px;top:515.3px;font-size:7.45px;color:#444">Familie</div><div class="t" style="left:915.2px;top:515.3px;font-size:7.6px;color:#333">breadboard</div><div class="t" style="left:870px;top:529.5px;font-size:7.45px;color:#444">Größe</div><div class="t" style="left:916px;top:530px;font-size:7.4px;color:#222">full+</div><div class="a" style="left:913px;top:540.5px;width:111px;height:3.5px;background:#ececec"></div>
<div class="a" style="left:0;top:544px;width:1024px;height:32px;background:linear-gradient(90deg,#2a1d23 0%,#2e1d21 25%,#321d1f 45%,#2d1d23 60%,#251c2b 80%,#211c2f 100%)"></div><div class="a" style="left:0;top:544px;width:1024px;height:1px;background:#3a3438"></div><div class="t" style="left:34.2px;top:550.5px;font-size:7.6px;color:#ececec">13°C</div><div class="t" style="left:34.2px;top:561.5px;font-size:8px;color:#d8d8d8">Teilw. sonnig</div><div class="a" style="left:237.3px;top:550px;width:145.3px;height:19.7px;border-radius:10px;background:#f1f1f1"></div><div class="t" style="left:261.4px;top:556.3px;font-size:8.6px;color:#444">Suche</div><div class="t" style="left:875.5px;top:556.8px;font-size:7px;color:#eee">DEU</div><div class="t" style="left:976px;top:551.2px;font-size:7.5px;color:#eee">12:07</div><div class="t" style="left:956.4px;top:561.5px;font-size:7.65px;color:#eee">21.10.2025</div><svg width="1024" height="576" viewBox="0 0 1024 576" style="left:0;top:0"><defs><linearGradient id="wg" x1="0" y1="0" x2="1" y2="1"><stop offset="0" stop-color="#7fd6fb"/><stop offset="1" stop-color="#1a9af0"/></linearGradient><linearGradient id="sun" x1="0" y1="0" x2="0" y2="1"><stop offset="0" stop-color="#ffc93a"/><stop offset="1" stop-color="#f08a10"/></linearGradient></defs><circle cx="21" cy="556.5" r="6.6" fill="url(#sun)"/><ellipse cx="17" cy="555" rx="4.3" ry="2.6" fill="#a9d4f5"/><ellipse cx="17.5" cy="553.2" rx="2.6" ry="2.2" fill="#c5e3fa"/><ellipse cx="24.5" cy="563.2" rx="4.6" ry="2.6" fill="#a9d4f5"/><ellipse cx="25" cy="561.3" rx="2.6" ry="2.2" fill="#c5e3fa"/><rect x="212" y="552.6" width="7.6" height="7.4" fill="url(#wg)"/><rect x="220.4" y="552.6" width="7.6" height="7.4" fill="url(#wg)"/><rect x="212" y="560.6" width="7.6" height="7.4" fill="url(#wg)"/><rect x="220.4" y="560.6" width="7.6" height="7.4" fill="url(#wg)"/><circle cx="248.8" cy="558.8" r="3.4" fill="none" stroke="#222" stroke-width="1.2"/><path d="M251.3 561.3L254 564" stroke="#222" stroke-width="1.3"/><rect x="391.2" y="556" width="11" height="10.6" rx="1" fill="#666"/><rect x="396" y="552.2" width="11.5" height="11" rx="1" fill="#d8d8d8"/><rect x="394" y="556" width="8" height="8" fill="#aaa"/><rect x="420.8" y="555" width="15.5" height="13" rx="2" fill="#f3f3f3"/><path d="M425 555V553Q428.5 550 432 553V555" fill="none" stroke="#2a7fd5" stroke-width="1.2"/><rect x="425.8" y="559" width="2.5" height="2.5" fill="#f25022"/><rect x="428.8" y="559" width="2.5" height="2.5" fill="#7fba00"/><rect x="425.8" y="562" width="2.5" height="2.5" fill="#00a4ef"/><rect x="428.8" y="562" width="2.5" height="2.5" fill="#ffb900"/><path d="M449.8 553.5H456L457.5 555H466V567H449.8Z" fill="#f5c02a"/><rect x="449.8" y="556.5" width="16.2" height="10.5" fill="#ffd54a"/><rect x="452.5" y="563" width="10.5" height="4" fill="#2d7fd8"/><rect x="455.5" y="571" width="5.5" height="1.5" rx="0.7" fill="#9a9a9a"/><circle cx="487.3" cy="560" r="7.9" fill="#2b9be0"/><circle cx="487.3" cy="560" r="6.6" fill="#1e88d0" stroke="#fff" stroke-width="0.8"/><text x="484" y="564" font-size="10" font-weight="bold" fill="#fff">?</text><circle cx="493.2" cy="553.7" r="4.9" fill="#f6b31a"/><defs><linearGradient id="edg" x1="0" y1="0" x2="1" y2="0.4"><stop offset="0" stop-color="#1c8de0"/><stop offset="0.55" stop-color="#2fc0c0"/><stop offset="1" stop-color="#5bd85e"/></linearGradient></defs><circle cx="517" cy="559.8" r="8" fill="url(#edg)"/><path d="M509 560.5Q509.5 567.8 517 567.8Q521.5 567.8 524 564.2Q520 565.5 518 563.5Q515 561.5 516 558.5Q512 557 509 560.5Z" fill="#1361b8"/><circle cx="517.3" cy="560.3" r="2.2" fill="#2a2026"/><path d="M509.2 558.5Q511 555 515.5 555.5Q512 556 510.5 559Z" fill="#1a74cf"/><circle cx="546" cy="560" r="8" fill="#fff"/><circle cx="546" cy="560" r="7.2" fill="#0a5fd6"/><text x="540.5" y="564.2" font-size="10" font-style="italic" font-weight="bold" fill="#fff">hp</text><circle cx="575.2" cy="559.5" r="6.6" fill="#13979a"/><ellipse cx="573.2" cy="559.5" rx="2.2" ry="1.8" fill="none" stroke="#fff" stroke-width="1"/><ellipse cx="577.2" cy="559.5" rx="2.2" ry="1.8" fill="none" stroke="#fff" stroke-width="1"/><rect x="572.2" y="571" width="6" height="1.5" rx="0.7" fill="#9a9a9a"/><circle cx="604.5" cy="559.5" r="6.6" fill="#13979a"/><ellipse cx="602.5" cy="559.5" rx="2.2" ry="1.8" fill="none" stroke="#fff" stroke-width="1"/><ellipse cx="606.5" cy="559.5" rx="2.2" ry="1.8" fill="none" stroke="#fff" stroke-width="1"/><rect x="601.5" y="571" width="6" height="1.5" rx="0.7" fill="#9a9a9a"/><circle cx="721.7" cy="559.5" r="6.6" fill="#13979a"/><ellipse cx="719.7" cy="559.5" rx="2.2" ry="1.8" fill="none" stroke="#fff" stroke-width="1"/><ellipse cx="723.7" cy="559.5" rx="2.2" ry="1.8" fill="none" stroke="#fff" stroke-width="1"/><rect x="718.7" y="571" width="6" height="1.5" rx="0.7" fill="#9a9a9a"/><circle cx="633.8" cy="560" r="7.6" fill="#ff8a18"/><circle cx="634.5" cy="560.5" r="4.6" fill="#7a3fe0"/><path d="M627 556Q630 551 636 552Q641 553 641.5 559Q639 554 634 555Z" fill="#ffc030"/><rect x="630.8" y="571" width="6" height="1.5" rx="0.7" fill="#9a9a9a"/><circle cx="663.1" cy="560.5" r="7.8" fill="#e23a2e"/><path d="M663.1 560.5L655.3000000000001 560.5A7.8 7.8 0 0 0 667.0 567.3Z" fill="#2aa84a"/><path d="M663.1 560.5L667.0 567.3A7.8 7.8 0 0 0 670.9 558Z" fill="#f8c21a"/><circle cx="663.1" cy="560.5" r="3.6" fill="#fff"/><circle cx="663.1" cy="560.5" r="2.7" fill="#2a78e0"/><circle cx="669.4" cy="553.6" r="4.9" fill="#8d7b76"/><text x="667.2" y="555.8" font-size="6" fill="#fff">K</text><rect x="660.1" y="571" width="6" height="1.5" rx="0.7" fill="#9a9a9a"/><circle cx="692.4" cy="560.5" r="7.8" fill="#e23a2e"/><path d="M692.4 560.5L684.6 560.5A7.8 7.8 0 0 0 696.3 567.3Z" fill="#2aa84a"/><path d="M692.4 560.5L696.3 567.3A7.8 7.8 0 0 0 700.1999999999999 558Z" fill="#f8c21a"/><circle cx="692.4" cy="560.5" r="3.6" fill="#fff"/><circle cx="692.4" cy="560.5" r="2.7" fill="#2a78e0"/><circle cx="698.6999999999999" cy="553.6" r="4.9" fill="#8a3ad0"/><text x="696.5" y="555.8" font-size="6" fill="#fff">K</text><rect x="689.4" y="571" width="6" height="1.5" rx="0.7" fill="#9a9a9a"/><rect x="738.7" y="547" width="24.9" height="26.5" rx="3" fill="#3a3040" opacity="0.9"/><rect x="743.5" y="552" width="15" height="14.5" fill="#d42a1e"/><rect x="743.5" y="565" width="15" height="1.6" fill="#a01a10"/><text x="747.5" y="564" font-size="12" font-weight="bold" fill="#fff" font-family="Liberation Serif">f</text><rect x="746.5" y="570.5" width="9" height="2" rx="1" fill="#5ab0f0"/><path d="M812 562.5L815 559.5L818 562.5" fill="none" stroke="#eee" stroke-width="1.1"/><ellipse cx="834.5" cy="559.5" rx="5" ry="3.5" fill="#d0d0d0"/><circle cx="838.5" cy="563" r="2.8" fill="#e02020"/><path d="M837.4 561.9L839.6 564.1M839.6 561.9L837.4 564.1" stroke="#fff" stroke-width="0.7"/><path d="M852.5 560A5 5 0 0 1 861.5 556.5M862 560.5A5 5 0 0 1 853 564" fill="none" stroke="#ddd" stroke-width="1.1"/><circle cx="860.5" cy="564" r="2.6" fill="#2a8af0"/><path d="M903 558.5Q908.3 553.5 913.6 558.5M904.8 560.5Q908.3 557 911.8 560.5M906.6 562.5Q908.3 561 910 562.5" fill="none" stroke="#eee" stroke-width="0.9"/><circle cx="908.3" cy="564" r="0.8" fill="#eee"/><path d="M919.5 558.3H921.5L924.5 555.5V565.5L921.5 562.7H919.5Z" fill="none" stroke="#eee" stroke-width="0.9"/><path d="M926 558.5L929.5 562.5M929.5 558.5L926 562.5" stroke="#eee" stroke-width="0.8"/><path d="M935 557H938L939.5 555.5H943.5V563.5H935Z" fill="none" stroke="#eee" stroke-width="0.9"/><rect x="935.5" y="558" width="9.5" height="5.5" fill="#eee" opacity="0.9"/><rect x="945" y="559.5" width="1" height="2.5" fill="#eee"/><path d="M1001 556.5H1008.5V563.5H1004L1001 566V556.5Z" fill="none" stroke="#eee" stroke-width="0.9"/><path d="M1003 559H1006.5M1003 561H1006.5" stroke="#eee" stroke-width="0.8"/></svg>
</body></html>
